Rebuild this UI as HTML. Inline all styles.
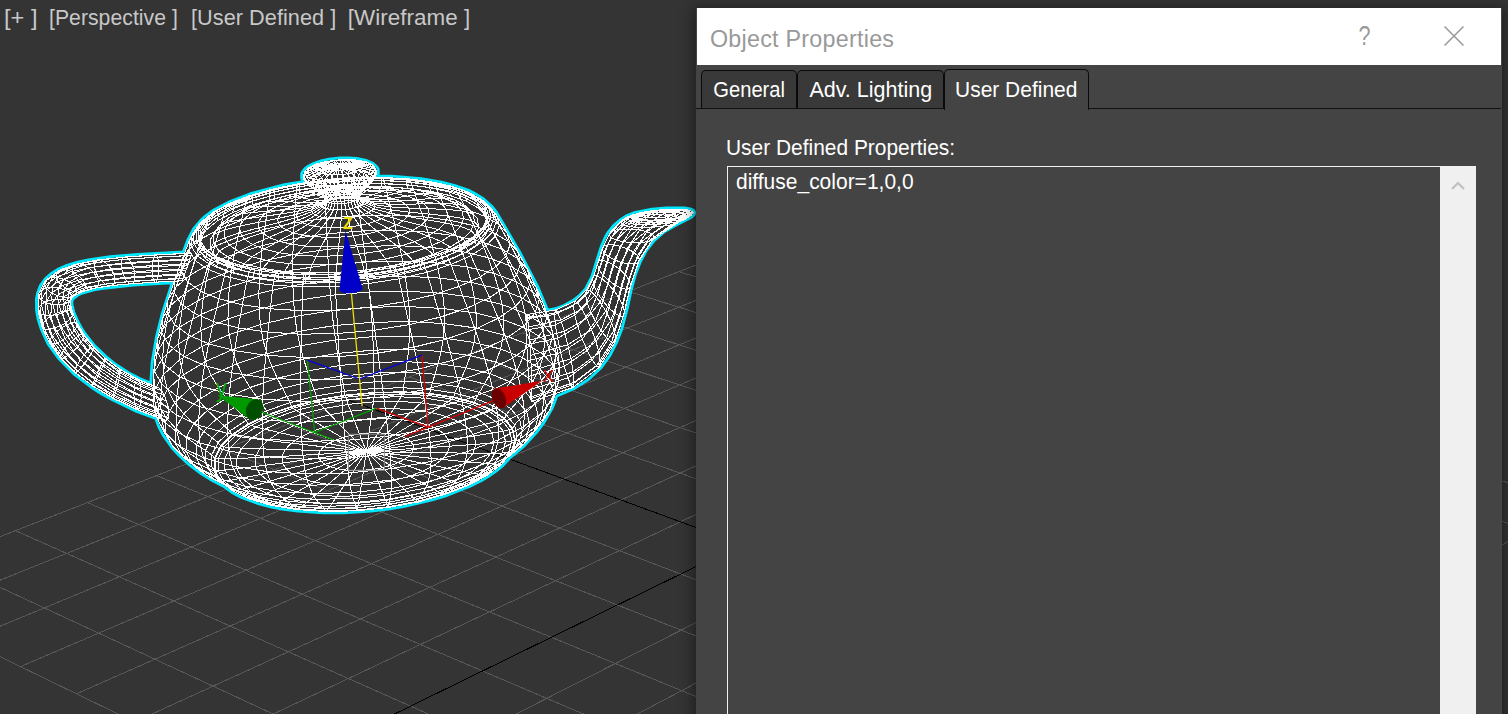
<!DOCTYPE html>
<html lang="en">
<head>
<meta charset="utf-8">
<title>Object Properties</title>
<style>
html,body{margin:0;padding:0;}
body{width:1508px;height:714px;overflow:hidden;background:#343434;position:relative;font-family:"Liberation Sans",sans-serif;}
#vp{position:absolute;left:0;top:0;}
#vplabel span{position:absolute;top:0;transform-origin:left center;}
#vplabel{position:absolute;left:4px;top:5px;width:480px;height:26px;font-size:22.4px;line-height:26px;color:#c8c8c8;white-space:pre;letter-spacing:0.05px;}
#shadow{position:absolute;left:696px;top:8px;width:806px;height:720px;box-shadow:0 2px 14px 2px rgba(0,0,0,0.45);}
#dlg{position:absolute;left:696px;top:8px;width:806px;height:706px;background:#444444;overflow:hidden;}
#title{position:absolute;left:1px;top:0;width:804px;height:57px;background:#ffffff;}
#title .t{position:absolute;left:13px;top:16px;font-size:23.3px;letter-spacing:0.25px;line-height:30px;color:#999999;white-space:nowrap;}
#title .q{position:absolute;left:659.5px;top:12.5px;font-size:27px;line-height:30px;color:#999999;}
#title svg{position:absolute;left:747px;top:17.5px;}
#tabline{position:absolute;left:0;top:100px;width:805px;height:1px;background:#111111;}
.tab{position:absolute;top:62px;height:38px;box-sizing:border-box;background:#393939;border:1px solid #0a0a0a;border-bottom:none;border-radius:5px 5px 0 0;color:#ffffff;font-size:22px;line-height:37px;text-align:center;white-space:nowrap;}
.tab.on{top:61px;height:41px;background:#444444;line-height:39px;}
.tab span,#lbl span,#ta .tx span{display:inline-block;transform-origin:center;}
#lbl span,#ta .tx span{transform-origin:left center;}
#lbl{position:absolute;left:30px;top:127px;font-size:22px;line-height:26px;color:#ffffff;white-space:nowrap;}
#ta{position:absolute;left:31px;top:158px;width:749px;height:600px;box-sizing:border-box;border:1px solid #f0f0f0;background:#444444;}
#ta .tx{position:absolute;left:8px;top:2px;font-size:22px;line-height:26px;color:#ffffff;white-space:nowrap;}
#sb{position:absolute;left:712px;top:0;width:35px;height:600px;background:#f0f0f0;}
#sb svg{position:absolute;left:11px;top:14px;}
</style>
</head>
<body>
<svg id="vp" width="1508" height="714" viewBox="0 0 1508 714">
<defs><clipPath id="out"><path clip-rule="evenodd" d="M-10,-10H1600V800H-10ZM38,310.8 39.5,319 42.2,327.8 49.2,343 59.8,357.5 75.2,373.2 91.8,385.8 102.5,392.8 113.5,398.8 137.2,410.2 156.8,417.5 160.2,426.5 164,433.8 172.8,446.5 180.5,454.8 189.2,463 201,471.8 211.5,478.5 225,485.5 232.8,491.2 241.2,495.8 259.5,502.5 272,505.8 284.2,508 298,509.8 323.2,511.5 343.5,511.5 371.2,509.8 389.5,507.5 404.2,505 431.8,498.5 446.2,494.2 469,485.2 480.5,479.5 487.8,475.2 495.2,470 501.8,464.5 509.2,456.5 523,445 534.8,432.2 542.5,422.2 551.2,407 555.8,395 573.8,387.2 587.8,378.2 599.8,367 608.5,355.2 615.5,341.5 620.5,328.5 626,307.8 630,289 634,274.5 638.8,261.8 645.2,249.8 652.8,240 664,230.2 676,223.5 690,216.5 692.8,214.2 693.2,212.5 692.5,211.2 690.2,210.2 684.2,209.2 666.5,209.2 652.2,210.5 634.5,214 627,217.2 621.2,220.8 614,227.2 609.2,233.2 606.2,238.5 602.5,247 593,277.5 586.8,289.5 580.8,296.2 574.2,301.5 565,306.5 555.8,310 546.8,311.8 536,286.2 518,251.8 495.8,213.8 491,207.5 483,200.2 476,195.8 468.8,192 454.5,187 441.2,183.5 420.8,180 391.5,177.5 375.8,177.2 375.5,176.8 377,173.5 376.8,169.5 376,168 372.2,164.5 366,161.8 356.2,159.8 349,159.2 340.2,159.2 329.2,160.5 321.5,162.2 314.2,164.8 308.8,167.5 306.5,169.2 304,172 303,174 303,178.2 305.5,182.2 304.8,182.8 284.8,186 250.8,195 231.2,202.5 214,211.5 205.8,217.5 202.5,220.5 194.8,229.5 189.2,240.2 184.2,253.2 138.2,255.8 110.5,258 90,261 79,263.2 66.5,267 58.5,270.5 52.2,274.5 47,279 41.5,286.5 38.8,293.8 37.8,299.5ZM77,294 81.8,291.8 93.5,288.5 101,287.2 133.2,283.8 170.8,281.5 174,281.8 163.5,314.2 157.8,337.2 153.5,362.5 152,385 139,379.8 129.2,374.8 112.8,364 106,358.5 93,346 84,334.5 80.2,328.8 76.5,321.8 72.5,312.5 70.5,304.5 70.5,301.2 71.8,298Z"/></clipPath></defs>
<path d="M765,1027.8L-137.1,590.2M765,1027.8L1569.7,500.9M841.6,977.6L-59.3,559.9M683.6,988.3L1497.9,479.8M914.4,929.9L15.5,530.7M605.4,950.4L1428.2,459.2M983.7,884.6L87.4,502.6M530.3,913.9L1360.5,439.3M1049.7,841.4L156.6,475.6M458,878.9L1294.8,419.9M1112.5,800.2L223.2,449.6M388.5,845.2L1230.9,401.1M1172.6,760.9L287.4,424.5M321.5,812.7L1168.7,382.7M1284.8,687.4L409,377M194.6,751.1L1049.5,347.6M1337.3,653.1L466.7,354.5M134.5,722L992.3,330.7M1387.7,620.1L522.4,332.8M76.5,693.8L936.6,314.3M1436,588.5L576.3,311.7M20.4,666.6L882.3,298.3M1482.3,558.1L628.3,291.4M-33.9,640.3L829.4,282.7M1526.8,529L678.8,271.7M-86.3,614.9L777.8,267.5M1569.7,500.9L727.6,252.7M-137.1,590.2L727.6,252.7" stroke="#575757" stroke-width="1" fill="none" shape-rendering="crispEdges"/>
<path d="M1229.9,723.4L349.3,400.3M256.9,781.3L1108.3,364.9" stroke="#000" stroke-width="1" fill="none" shape-rendering="crispEdges"/>
<g clip-path="url(#out)"><path d="M38,310.8 39.5,319 42.2,327.8 49.2,343 59.8,357.5 75.2,373.2 91.8,385.8 102.5,392.8 113.5,398.8 137.2,410.2 156.8,417.5 160.2,426.5 164,433.8 172.8,446.5 180.5,454.8 189.2,463 201,471.8 211.5,478.5 225,485.5 232.8,491.2 241.2,495.8 259.5,502.5 272,505.8 284.2,508 298,509.8 323.2,511.5 343.5,511.5 371.2,509.8 389.5,507.5 404.2,505 431.8,498.5 446.2,494.2 469,485.2 480.5,479.5 487.8,475.2 495.2,470 501.8,464.5 509.2,456.5 523,445 534.8,432.2 542.5,422.2 551.2,407 555.8,395 573.8,387.2 587.8,378.2 599.8,367 608.5,355.2 615.5,341.5 620.5,328.5 626,307.8 630,289 634,274.5 638.8,261.8 645.2,249.8 652.8,240 664,230.2 676,223.5 690,216.5 692.8,214.2 693.2,212.5 692.5,211.2 690.2,210.2 684.2,209.2 666.5,209.2 652.2,210.5 634.5,214 627,217.2 621.2,220.8 614,227.2 609.2,233.2 606.2,238.5 602.5,247 593,277.5 586.8,289.5 580.8,296.2 574.2,301.5 565,306.5 555.8,310 546.8,311.8 536,286.2 518,251.8 495.8,213.8 491,207.5 483,200.2 476,195.8 468.8,192 454.5,187 441.2,183.5 420.8,180 391.5,177.5 375.8,177.2 375.5,176.8 377,173.5 376.8,169.5 376,168 372.2,164.5 366,161.8 356.2,159.8 349,159.2 340.2,159.2 329.2,160.5 321.5,162.2 314.2,164.8 308.8,167.5 306.5,169.2 304,172 303,174 303,178.2 305.5,182.2 304.8,182.8 284.8,186 250.8,195 231.2,202.5 214,211.5 205.8,217.5 202.5,220.5 194.8,229.5 189.2,240.2 184.2,253.2 138.2,255.8 110.5,258 90,261 79,263.2 66.5,267 58.5,270.5 52.2,274.5 47,279 41.5,286.5 38.8,293.8 37.8,299.5ZM77,294 81.8,291.8 93.5,288.5 101,287.2 133.2,283.8 170.8,281.5 174,281.8 163.5,314.2 157.8,337.2 153.5,362.5 152,385 139,379.8 129.2,374.8 112.8,364 106,358.5 93,346 84,334.5 80.2,328.8 76.5,321.8 72.5,312.5 70.5,304.5 70.5,301.2 71.8,298Z" stroke="#00e8ff" stroke-width="5.6" stroke-linejoin="round" fill="none"/></g>
<path id="wire" shape-rendering="crispEdges" d="M362.9,166.4 362.1,167.9 360.5,169.3 358.1,170.7 355,171.9 351.3,172.9 347.2,173.8 342.7,174.4 337.9,174.8M374.4,168.9 373.3,171.1 370.9,173.2 367.4,175.2 362.8,177 357.4,178.6 351.2,179.8 344.5,180.8 337.4,181.3M377,173.2 375.8,175.5 373.3,177.8 369.5,179.9 364.7,181.8 358.9,183.5 352.4,184.9 345.2,185.9 337.7,186.5M373.7,178.7 372.7,180.9 370.4,182.9 367,184.8 362.7,186.6 357.5,188.1 351.6,189.3 345.2,190.2 338.4,190.7M367.6,185 366.8,186.7 364.9,188.4 362.2,189.9 358.8,191.3 354.6,192.5 350,193.5 344.9,194.2 339.5,194.6M361.8,191.4 361.1,192.7 359.8,194 357.7,195.1 355.1,196.2 351.9,197.1 348.4,197.9 344.5,198.4 340.5,198.7M359.3,197.4 358.7,198.5 357.5,199.5 355.8,200.5 353.6,201.4 350.9,202.2 347.9,202.9 344.7,203.3 341.2,203.6M363.1,202.3 362.5,203.6 361,204.9 359,206.1 356.3,207.2 353.1,208.2 349.5,208.9 345.6,209.5 341.5,209.8M339.3,166.4 362.9,166.4 374.4,168.9 377,173.2 373.7,178.7 367.6,185 361.8,191.4 359.3,197.4 363.1,202.3M339.3,166.4 362.1,167.9 373.3,171.1 375.8,175.5 372.7,180.9 366.8,186.7 361.1,192.7 358.7,198.5 362.5,203.6M339.3,166.4 360.5,169.3 370.9,173.2 373.3,177.8 370.4,182.9 364.9,188.4 359.8,194 357.5,199.5 361,204.9M339.3,166.4 358.1,170.7 367.4,175.2 369.5,179.9 367,184.8 362.2,189.9 357.7,195.1 355.8,200.5 359,206.1M339.3,166.4 355,171.9 362.8,177 364.7,181.8 362.7,186.6 358.8,191.3 355.1,196.2 353.6,201.4 356.3,207.2M339.3,166.4 351.3,172.9 357.4,178.6 358.9,183.5 357.5,188.1 354.6,192.5 351.9,197.1 350.9,202.2 353.1,208.2M339.3,166.4 347.2,173.8 351.2,179.8 352.4,184.9 351.6,189.3 350,193.5 348.4,197.9 347.9,202.9 349.5,208.9M339.3,166.4 342.7,174.4 344.5,180.8 345.2,185.9 345.2,190.2 344.9,194.2 344.5,198.4 344.7,203.3 345.6,209.5M339.3,166.4 337.9,174.8 337.4,181.3 337.7,186.5 338.4,190.7 339.5,194.6 340.5,198.7 341.2,203.6 341.5,209.8M340.9,160.2 345.6,160.2 349.9,160.4 353.7,160.9 357,161.6 359.7,162.5 361.6,163.7 362.7,165 362.9,166.4M341.9,159.7 348.8,159.6 355.2,160 360.8,160.7 365.7,161.7 369.6,163.1 372.4,164.8 374.1,166.7 374.4,168.9M342.5,163.4 349.8,163.3 356.5,163.7 362.5,164.4 367.7,165.6 371.8,167.1 374.9,168.8 376.6,170.9 377,173.2M342.8,170 349.3,169.9 355.4,170.2 360.8,170.9 365.4,171.9 369.1,173.2 371.8,174.8 373.4,176.7 373.7,178.7M342.9,178 348.1,177.9 353,178.1 357.3,178.7 361,179.5 364,180.6 366.1,181.9 367.4,183.4 367.6,185M343.1,186 347,186 350.7,186.2 354,186.6 356.8,187.2 359,188 360.7,189 361.6,190.2 361.8,191.4M343.4,192.8 346.8,192.7 349.9,192.9 352.7,193.3 355,193.8 356.9,194.5 358.3,195.3 359.1,196.3 359.3,197.4M344.1,196.8 348.1,196.7 351.9,196.9 355.2,197.4 358,198 360.3,198.9 362,199.9 362.9,201 363.1,202.3M339.3,166.4 340.9,160.2 341.9,159.7 342.5,163.4 342.8,170 342.9,178 343.1,186 343.4,192.8 344.1,196.8M339.3,166.4 345.6,160.2 348.8,159.6 349.8,163.3 349.3,169.9 348.1,177.9 347,186 346.8,192.7 348.1,196.7M339.3,166.4 349.9,160.4 355.2,160 356.5,163.7 355.4,170.2 353,178.1 350.7,186.2 349.9,192.9 351.9,196.9M339.3,166.4 353.7,160.9 360.8,160.7 362.5,164.4 360.8,170.9 357.3,178.7 354,186.6 352.7,193.3 355.2,197.4M339.3,166.4 357,161.6 365.7,161.7 367.7,165.6 365.4,171.9 361,179.5 356.8,187.2 355,193.8 358,198M339.3,166.4 359.7,162.5 369.6,163.1 371.8,167.1 369.1,173.2 364,180.6 359,188 356.9,194.5 360.3,198.9M339.3,166.4 361.6,163.7 372.4,164.8 374.9,168.8 371.8,174.8 366.1,181.9 360.7,189 358.3,195.3 362,199.9M339.3,166.4 362.7,165 374.1,166.7 376.6,170.9 373.4,176.7 367.4,183.4 361.6,190.2 359.1,196.3 362.9,201M315.9,168.5 316.7,167 318.4,165.6 320.8,164.3 323.9,163.1 327.6,162 331.7,161.2 336.2,160.6 340.9,160.2M304.8,172 306.1,169.8 308.6,167.7 312.2,165.7 316.8,163.9 322.3,162.4 328.3,161.2 334.9,160.3 341.9,159.7M303.1,176.5 304.4,174.2 307.1,171.9 310.9,169.8 315.8,167.9 321.6,166.3 328,165 335.1,164 342.5,163.4M307.4,181.8 308.6,179.6 311,177.6 314.4,175.7 318.8,174 324,172.5 329.8,171.3 336.1,170.5 342.8,170M314.7,187.5 315.6,185.7 317.5,184.1 320.3,182.6 323.8,181.2 327.9,180 332.5,179.1 337.6,178.4 342.9,178M321.7,193.3 322.4,192 323.8,190.7 325.9,189.6 328.6,188.5 331.7,187.6 335.2,186.9 339,186.3 343.1,186M325.3,199 325.9,197.9 327.1,196.8 328.9,195.8 331.1,194.9 333.8,194.1 336.7,193.5 340,193.1 343.4,192.8M322.4,204.2 323.1,202.9 324.6,201.6 326.7,200.4 329.4,199.4 332.6,198.4 336.1,197.7 340,197.1 344.1,196.8M339.3,166.4 315.9,168.5 304.8,172 303.1,176.5 307.4,181.8 314.7,187.5 321.7,193.3 325.3,199 322.4,204.2M339.3,166.4 316.7,167 306.1,169.8 304.4,174.2 308.6,179.6 315.6,185.7 322.4,192 325.9,197.9 323.1,202.9M339.3,166.4 318.4,165.6 308.6,167.7 307.1,171.9 311,177.6 317.5,184.1 323.8,190.7 327.1,196.8 324.6,201.6M339.3,166.4 320.8,164.3 312.2,165.7 310.9,169.8 314.4,175.7 320.3,182.6 325.9,189.6 328.9,195.8 326.7,200.4M339.3,166.4 323.9,163.1 316.8,163.9 315.8,167.9 318.8,174 323.8,181.2 328.6,188.5 331.1,194.9 329.4,199.4M339.3,166.4 327.6,162 322.3,162.4 321.6,166.3 324,172.5 327.9,180 331.7,187.6 333.8,194.1 332.6,198.4M339.3,166.4 331.7,161.2 328.3,161.2 328,165 329.8,171.3 332.5,179.1 335.2,186.9 336.7,193.5 336.1,197.7M339.3,166.4 336.2,160.6 334.9,160.3 335.1,164 336.1,170.5 337.6,178.4 339,186.3 340,193.1 340,197.1M337.9,174.8 333.1,174.9 328.8,174.6 324.9,174.1 321.6,173.4 319,172.4 317.1,171.3 316,170 315.9,168.5M337.4,181.3 330.4,181.4 323.9,181.1 318.2,180.4 313.3,179.2 309.4,177.8 306.6,176.1 305,174.2 304.8,172M337.7,186.5 330.2,186.6 323.3,186.2 317.2,185.4 312,184.3 307.9,182.7 304.9,180.9 303.3,178.8 303.1,176.5M338.4,190.7 331.7,190.8 325.6,190.5 320.1,189.8 315.5,188.7 311.7,187.4 309.1,185.7 307.6,183.8 307.4,181.8M339.5,194.6 334.1,194.7 329.2,194.5 324.8,193.9 321.1,193 318.2,191.9 316,190.6 314.8,189.1 314.7,187.5M340.5,198.7 336.4,198.8 332.7,198.6 329.4,198.2 326.6,197.5 324.3,196.7 322.7,195.7 321.8,194.5 321.7,193.3M341.2,203.6 337.8,203.7 334.7,203.5 331.9,203.1 329.5,202.6 327.6,201.9 326.2,201 325.4,200 325.3,199M341.5,209.8 337.4,209.9 333.6,209.7 330.3,209.2 327.4,208.6 325.1,207.7 323.5,206.7 322.6,205.5 322.4,204.2M339.3,166.4 333.1,174.9 330.4,181.4 330.2,186.6 331.7,190.8 334.1,194.7 336.4,198.8 337.8,203.7 337.4,209.9M339.3,166.4 328.8,174.6 323.9,181.1 323.3,186.2 325.6,190.5 329.2,194.5 332.7,198.6 334.7,203.5 333.6,209.7M339.3,166.4 324.9,174.1 318.2,180.4 317.2,185.4 320.1,189.8 324.8,193.9 329.4,198.2 331.9,203.1 330.3,209.2M339.3,166.4 321.6,173.4 313.3,179.2 312,184.3 315.5,188.7 321.1,193 326.6,197.5 329.5,202.6 327.4,208.6M339.3,166.4 319,172.4 309.4,177.8 307.9,182.7 311.7,187.4 318.2,191.9 324.3,196.7 327.6,201.9 325.1,207.7M339.3,166.4 317.1,171.3 306.6,176.1 304.9,180.9 309.1,185.7 316,190.6 322.7,195.7 326.2,201 323.5,206.7M339.3,166.4 316,170 305,174.2 303.3,178.8 307.6,183.8 314.8,189.1 321.8,194.5 325.4,200 322.6,205.5M363.5,202.3 362.9,203.7 361.4,205 359.3,206.2 356.6,207.3 353.3,208.3 349.7,209 345.7,209.6 341.5,209.9M374.8,206.7 373.8,208.8 371.6,210.8 368.4,212.7 364.3,214.4 359.4,215.9 353.8,217.1 347.7,218 341.2,218.5M390.8,209.9 389.3,213 386.1,216 381.3,218.8 375.2,221.4 367.8,223.6 359.4,225.5 350.3,226.8 340.6,227.6M409.6,212.2 407.6,216.5 403.2,220.8 396.6,224.7 388,228.3 377.7,231.5 366,234 353.2,235.9 339.6,237.1M429.2,214.1 426.8,219.8 421.2,225.2 412.7,230.4 401.5,235.1 388.2,239.2 373,242.6 356.4,245.1 338.6,246.6M447.8,216.1 445,222.9 438.3,229.6 428,236 414.5,241.8 398.3,246.8 379.7,251 359.3,254.1 337.6,255.9M463.6,218.5 460.5,226.4 452.8,234.2 441,241.5 425.6,248.2 406.9,254.1 385.5,258.9 362,262.5 336.9,264.6M474.6,221.8 471.2,230.5 463,239 450.2,247 433.4,254.4 413,260.9 389.7,266.2 364,270.1 336.5,272.4M478.9,226.5 475.5,235.5 467.1,244.3 453.9,252.6 436.6,260.2 415.6,266.9 391.5,272.5 365,276.6 336.7,279M363.5,202.3 374.8,206.7 390.8,209.9 409.6,212.2 429.2,214.1 447.8,216.1 463.6,218.5 474.6,221.8 478.9,226.5M362.9,203.7 373.8,208.8 389.3,213 407.6,216.5 426.8,219.8 445,222.9 460.5,226.4 471.2,230.5 475.5,235.5M361.4,205 371.6,210.8 386.1,216 403.2,220.8 421.2,225.2 438.3,229.6 452.8,234.2 463,239 467.1,244.3M359.3,206.2 368.4,212.7 381.3,218.8 396.6,224.7 412.7,230.4 428,236 441,241.5 450.2,247 453.9,252.6M356.6,207.3 364.3,214.4 375.2,221.4 388,228.3 401.5,235.1 414.5,241.8 425.6,248.2 433.4,254.4 436.6,260.2M353.3,208.3 359.4,215.9 367.8,223.6 377.7,231.5 388.2,239.2 398.3,246.8 406.9,254.1 413,260.9 415.6,266.9M349.7,209 353.8,217.1 359.4,225.5 366,234 373,242.6 379.7,251 385.5,258.9 389.7,266.2 391.5,272.5M345.7,209.6 347.7,218 350.3,226.8 353.2,235.9 356.4,245.1 359.3,254.1 362,262.5 364,270.1 365,276.6M341.5,209.9 341.2,218.5 340.6,227.6 339.6,237.1 338.6,246.6 337.6,255.9 336.9,264.6 336.5,272.4 336.7,279M344.1,196.7 348.3,196.6 352,196.8 355.4,197.2 358.3,197.9 360.7,198.8 362.4,199.8 363.3,201 363.5,202.3M345.3,198.2 351.5,198.1 357.3,198.4 362.4,199 366.9,200 370.4,201.3 373,202.9 374.5,204.7 374.8,206.7M346.6,197.1 356,196.9 364.5,197.4 372.2,198.4 378.8,199.9 384.1,201.8 388,204.2 390.3,206.9 390.8,209.9M348.1,194.4 361,194.2 372.9,194.8 383.5,196.2 392.7,198.3 400.1,201 405.6,204.3 408.8,208 409.6,212.2M349.5,191.1 366.2,190.9 381.6,191.7 395.3,193.5 407.1,196.1 416.8,199.6 423.9,203.8 428.2,208.7 429.2,214.1M350.9,188.2 371.1,187.9 389.7,188.9 406.4,191 420.7,194.2 432.5,198.5 441.2,203.6 446.5,209.4 447.8,216.1M352.2,186.5 375.3,186.2 396.6,187.3 415.7,189.7 432.2,193.4 445.7,198.3 455.8,204.1 461.9,210.9 463.6,218.5M353.1,187 378.3,186.6 401.4,187.8 422.2,190.5 440.2,194.5 454.9,199.8 465.9,206.1 472.6,213.5 474.6,221.8M353.8,190.5 379.7,190.1 403.5,191.4 424.9,194.1 443.4,198.3 458.6,203.7 469.9,210.3 476.9,217.9 478.9,226.5M344.1,196.7 345.3,198.2 346.6,197.1 348.1,194.4 349.5,191.1 350.9,188.2 352.2,186.5 353.1,187 353.8,190.5M348.3,196.6 351.5,198.1 356,196.9 361,194.2 366.2,190.9 371.1,187.9 375.3,186.2 378.3,186.6 379.7,190.1M352,196.8 357.3,198.4 364.5,197.4 372.9,194.8 381.6,191.7 389.7,188.9 396.6,187.3 401.4,187.8 403.5,191.4M355.4,197.2 362.4,199 372.2,198.4 383.5,196.2 395.3,193.5 406.4,191 415.7,189.7 422.2,190.5 424.9,194.1M358.3,197.9 366.9,200 378.8,199.9 392.7,198.3 407.1,196.1 420.7,194.2 432.2,193.4 440.2,194.5 443.4,198.3M360.7,198.8 370.4,201.3 384.1,201.8 400.1,201 416.8,199.6 432.5,198.5 445.7,198.3 454.9,199.8 458.6,203.7M362.4,199.8 373,202.9 388,204.2 405.6,204.3 423.9,203.8 441.2,203.6 455.8,204.1 465.9,206.1 469.9,210.3M363.3,201 374.5,204.7 390.3,206.9 408.8,208 428.2,208.7 446.5,209.4 461.9,210.9 472.6,213.5 476.9,217.9M322,204.2 322.7,202.9 324.2,201.6 326.4,200.4 329.1,199.3 332.4,198.3 336,197.6 339.9,197 344.1,196.7M311.6,209.7 312.7,207.6 315,205.6 318.3,203.8 322.5,202.1 327.4,200.7 332.9,199.5 338.9,198.7 345.3,198.2M296.2,214.4 297.9,211.2 301.4,208.3 306.3,205.5 312.6,203 320,200.8 328.2,199.1 337.2,197.8 346.6,197.1M277.8,218.5 280.3,214.1 285.1,209.9 292.1,206.1 300.8,202.6 311.1,199.6 322.5,197.2 335,195.4 348.1,194.4M258.4,222.3 261.7,216.6 268,211.2 277.1,206.2 288.5,201.7 301.7,197.8 316.6,194.7 332.6,192.4 349.5,191.1M239.9,226 244,219.1 251.9,212.5 263,206.4 276.8,201 293,196.3 311,192.5 330.4,189.8 350.9,188.2M224.4,230 229.2,222 238.3,214.4 251.2,207.4 267.2,201.1 285.7,195.8 306.4,191.4 328.7,188.3 352.2,186.5M213.8,234.4 219.2,225.6 229.2,217.4 243.2,209.7 260.7,202.9 280.9,197.1 303.4,192.4 327.6,188.9 353.1,187M210.3,239.6 215.8,230.5 226.2,221.9 240.7,214 258.6,207 279.5,200.9 302.6,196.1 327.6,192.5 353.8,190.5M322,204.2 311.6,209.7 296.2,214.4 277.8,218.5 258.4,222.3 239.9,226 224.4,230 213.8,234.4 210.3,239.6M322.7,202.9 312.7,207.6 297.9,211.2 280.3,214.1 261.7,216.6 244,219.1 229.2,222 219.2,225.6 215.8,230.5M324.2,201.6 315,205.6 301.4,208.3 285.1,209.9 268,211.2 251.9,212.5 238.3,214.4 229.2,217.4 226.2,221.9M326.4,200.4 318.3,203.8 306.3,205.5 292.1,206.1 277.1,206.2 263,206.4 251.2,207.4 243.2,209.7 240.7,214M329.1,199.3 322.5,202.1 312.6,203 300.8,202.6 288.5,201.7 276.8,201 267.2,201.1 260.7,202.9 258.6,207M332.4,198.3 327.4,200.7 320,200.8 311.1,199.6 301.7,197.8 293,196.3 285.7,195.8 280.9,197.1 279.5,200.9M336,197.6 332.9,199.5 328.2,199.1 322.5,197.2 316.6,194.7 311,192.5 306.4,191.4 303.4,192.4 302.6,196.1M339.9,197 338.9,198.7 337.2,197.8 335,195.4 332.6,192.4 330.4,189.8 328.7,188.3 327.6,188.9 327.6,192.5M341.5,209.9 337.3,210 333.4,209.8 330,209.4 327.1,208.7 324.8,207.8 323.1,206.8 322.2,205.6 322,204.2M341.2,218.5 334.8,218.6 329,218.3 323.8,217.6 319.3,216.5 315.8,215.2 313.2,213.6 311.8,211.7 311.6,209.7M340.6,227.6 331,227.7 322.2,227.3 314.3,226.2 307.7,224.6 302.3,222.6 298.6,220.2 296.5,217.4 296.2,214.4M339.6,237.1 326.2,237.3 313.8,236.6 302.9,235.1 293.6,232.9 286.2,230 280.9,226.6 278.1,222.7 277.8,218.5M338.6,246.6 321.1,246.9 305,246 290.7,244 278.6,241.1 269,237.4 262.2,232.9 258.6,227.8 258.4,222.3M337.6,255.9 316.2,256.2 296.4,255.1 279,252.7 264.2,249.2 252.6,244.6 244.4,239.1 240.1,232.8 239.9,226M336.9,264.6 312,265 289.3,263.8 269.1,261 252.1,256.8 238.7,251.5 229.4,245.1 224.5,237.9 224.4,230M336.5,272.4 309.4,272.9 284.5,271.5 262.5,268.4 243.9,263.9 229.3,258 219.1,251 213.8,243.1 213.8,234.4M336.7,279 308.7,279.4 283,278 260.3,274.8 241.2,270.1 226.1,264 215.7,256.7 210.3,248.5 210.3,239.6M337.3,210 334.8,218.6 331,227.7 326.2,237.3 321.1,246.9 316.2,256.2 312,265 309.4,272.9 308.7,279.4M333.4,209.8 329,218.3 322.2,227.3 313.8,236.6 305,246 296.4,255.1 289.3,263.8 284.5,271.5 283,278M330,209.4 323.8,217.6 314.3,226.2 302.9,235.1 290.7,244 279,252.7 269.1,261 262.5,268.4 260.3,274.8M327.1,208.7 319.3,216.5 307.7,224.6 293.6,232.9 278.6,241.1 264.2,249.2 252.1,256.8 243.9,263.9 241.2,270.1M324.8,207.8 315.8,215.2 302.3,222.6 286.2,230 269,237.4 252.6,244.6 238.7,251.5 229.3,258 226.1,264M323.1,206.8 313.2,213.6 298.6,220.2 280.9,226.6 262.2,232.9 244.4,239.1 229.4,245.1 219.1,251 215.7,256.7M322.2,205.6 311.8,211.7 296.5,217.4 278.1,222.7 258.6,227.8 240.1,232.8 224.5,237.9 213.8,243.1 210.3,248.5M489.1,226 485.5,235.7 476.5,245.2 462.4,254.1 443.7,262.4 421.2,269.6 395.2,275.6 366.6,280 336,282.7M487.1,221.9 483.6,231.4 474.6,240.7 460.7,249.6 442.2,257.7 419.9,264.8 394.2,270.7 365.9,275.1 335.7,277.6M486.6,218.9 483,228.4 474.1,237.6 460.1,246.4 441.7,254.5 419.4,261.6 393.8,267.5 365.6,271.8 335.4,274.4M487.2,217 483.6,226.6 474.6,235.9 460.6,244.7 442.1,252.8 419.7,259.9 393.9,265.8 365.5,270.2 335.2,272.7M488.7,216.4 485.1,226 476,235.4 461.9,244.3 443.2,252.5 420.5,259.7 394.4,265.7 365.7,270.1 335,272.7M490.9,216.9 487.3,226.6 478.1,236.2 463.7,245.2 444.7,253.6 421.7,260.9 395.3,267 366.1,271.5 334.9,274.1M493.6,218.5 489.9,228.5 480.6,238.2 466,247.5 446.7,256 423.3,263.5 396.4,269.6 366.7,274.2 334.9,276.9M496.4,221.4 492.7,231.6 483.2,241.5 468.4,251 448.8,259.6 425,267.3 397.6,273.6 367.4,278.3 335.1,281M499.3,225.5 495.5,235.9 485.9,246 470.9,255.7 450.9,264.5 426.7,272.3 398.9,278.8 368.2,283.6 335.3,286.4M489.1,226 487.1,221.9 486.6,218.9 487.2,217 488.7,216.4 490.9,216.9 493.6,218.5 496.4,221.4 499.3,225.5M485.5,235.7 483.6,231.4 483,228.4 483.6,226.6 485.1,226 487.3,226.6 489.9,228.5 492.7,231.6 495.5,235.9M476.5,245.2 474.6,240.7 474.1,237.6 474.6,235.9 476,235.4 478.1,236.2 480.6,238.2 483.2,241.5 485.9,246M462.4,254.1 460.7,249.6 460.1,246.4 460.6,244.7 461.9,244.3 463.7,245.2 466,247.5 468.4,251 470.9,255.7M443.7,262.4 442.2,257.7 441.7,254.5 442.1,252.8 443.2,252.5 444.7,253.6 446.7,256 448.8,259.6 450.9,264.5M421.2,269.6 419.9,264.8 419.4,261.6 419.7,259.9 420.5,259.7 421.7,260.9 423.3,263.5 425,267.3 426.7,272.3M395.2,275.6 394.2,270.7 393.8,267.5 393.9,265.8 394.4,265.7 395.3,267 396.4,269.6 397.6,273.6 398.9,278.8M366.6,280 365.9,275.1 365.6,271.8 365.5,270.2 365.7,270.1 366.1,271.5 366.7,274.2 367.4,278.3 368.2,283.6M336,282.7 335.7,277.6 335.4,274.4 335.2,272.7 335,272.7 334.9,274.1 334.9,276.9 335.1,281 335.3,286.4M354.4,187.4 382.2,187 407.8,188.3 430.7,191.3 450.7,195.7 467,201.5 479.3,208.6 486.9,216.8 489.1,226M354,183.8 381.4,183.4 406.7,184.7 429.5,187.6 449.2,192 465.3,197.7 477.4,204.7 484.9,212.8 487.1,221.9M353.7,180.9 381.1,180.5 406.3,181.9 429,184.8 448.7,189.1 464.8,194.8 476.9,201.8 484.4,209.8 486.6,218.9M353.5,178.9 381.1,178.5 406.5,179.9 429.3,182.8 449.1,187.2 465.3,192.9 477.4,199.9 484.9,207.9 487.2,217M353.6,177.9 381.4,177.5 407.1,178.8 430.1,181.8 450.1,186.2 466.5,192 478.8,199 486.4,207.2 488.7,216.4M353.8,177.8 382,177.4 408.1,178.8 431.4,181.8 451.7,186.2 468.4,192.1 480.9,199.2 488.6,207.5 490.9,216.9M354.1,178.8 382.8,178.4 409.3,179.8 433,182.8 453.7,187.4 470.6,193.4 483.3,200.6 491.2,209 493.6,218.5M354.5,180.9 383.7,180.5 410.6,181.9 434.8,185 455.8,189.7 473,195.8 486,203.2 494,211.8 496.4,221.4M355,184.2 384.7,183.8 412,185.3 436.6,188.4 457.9,193.2 475.4,199.4 488.6,206.9 496.8,215.7 499.3,225.5M354.4,187.4 354,183.8 353.7,180.9 353.5,178.9 353.6,177.9 353.8,177.8 354.1,178.8 354.5,180.9 355,184.2M382.2,187 381.4,183.4 381.1,180.5 381.1,178.5 381.4,177.5 382,177.4 382.8,178.4 383.7,180.5 384.7,183.8M407.8,188.3 406.7,184.7 406.3,181.9 406.5,179.9 407.1,178.8 408.1,178.8 409.3,179.8 410.6,181.9 412,185.3M430.7,191.3 429.5,187.6 429,184.8 429.3,182.8 430.1,181.8 431.4,181.8 433,182.8 434.8,185 436.6,188.4M450.7,195.7 449.2,192 448.7,189.1 449.1,187.2 450.1,186.2 451.7,186.2 453.7,187.4 455.8,189.7 457.9,193.2M467,201.5 465.3,197.7 464.8,194.8 465.3,192.9 466.5,192 468.4,192.1 470.6,193.4 473,195.8 475.4,199.4M479.3,208.6 477.4,204.7 476.9,201.8 477.4,199.9 478.8,199 480.9,199.2 483.3,200.6 486,203.2 488.6,206.9M486.9,216.8 484.9,212.8 484.4,209.8 484.9,207.9 486.4,207.2 488.6,207.5 491.2,209 494,211.8 496.8,215.7M199.8,240.1 205.9,230.3 217.1,221.1 232.7,212.6 252.1,205 274.5,198.5 299.4,193.3 326.2,189.5 354.4,187.4M201,235.7 207,226.1 218.1,217 233.6,208.6 252.7,201.2 274.9,194.8 299.5,189.6 326.1,185.9 354,183.8M201,232.6 207,223 218.1,214 233.5,205.7 252.6,198.2 274.8,191.9 299.3,186.8 325.8,183.1 353.7,180.9M200.1,230.8 206.1,221.2 217.2,212.1 232.7,203.8 251.9,196.3 274.2,189.9 298.9,184.8 325.5,181.1 353.5,178.9M198.4,230.3 204.5,220.6 215.7,211.4 231.4,202.9 250.9,195.4 273.4,189 298.4,183.8 325.3,180 353.6,177.9M196.2,231 202.4,221.1 213.8,211.8 229.8,203.2 249.5,195.6 272.4,189.1 297.8,183.8 325.1,180 353.8,177.8M193.8,233 200.1,222.9 211.8,213.4 228,204.7 248.1,196.9 271.4,190.3 297.2,184.9 324.9,181 354.1,178.8M191.4,236.2 197.9,225.9 209.8,216.2 226.3,207.3 246.7,199.4 270.4,192.6 296.6,187.1 324.8,183.2 354.5,180.9M189.3,240.6 195.9,230.1 208,220.2 224.8,211.1 245.6,203.1 269.6,196.2 296.3,190.6 324.9,186.6 355,184.2M199.8,240.1 201,235.7 201,232.6 200.1,230.8 198.4,230.3 196.2,231 193.8,233 191.4,236.2 189.3,240.6M205.9,230.3 207,226.1 207,223 206.1,221.2 204.5,220.6 202.4,221.1 200.1,222.9 197.9,225.9 195.9,230.1M217.1,221.1 218.1,217 218.1,214 217.2,212.1 215.7,211.4 213.8,211.8 211.8,213.4 209.8,216.2 208,220.2M232.7,212.6 233.6,208.6 233.5,205.7 232.7,203.8 231.4,202.9 229.8,203.2 228,204.7 226.3,207.3 224.8,211.1M252.1,205 252.7,201.2 252.6,198.2 251.9,196.3 250.9,195.4 249.5,195.6 248.1,196.9 246.7,199.4 245.6,203.1M274.5,198.5 274.9,194.8 274.8,191.9 274.2,189.9 273.4,189 272.4,189.1 271.4,190.3 270.4,192.6 269.6,196.2M299.4,193.3 299.5,189.6 299.3,186.8 298.9,184.8 298.4,183.8 297.8,183.8 297.2,184.9 296.6,187.1 296.3,190.6M326.2,189.5 326.1,185.9 325.8,183.1 325.5,181.1 325.3,180 325.1,180 324.9,181 324.8,183.2 324.9,186.6M336,282.7 305.8,283.2 278,281.6 253.5,278.1 232.9,273 216.7,266.4 205.4,258.6 199.7,249.7 199.8,240.1M335.7,277.6 305.8,278.1 278.4,276.6 254.1,273.2 233.7,268.2 217.7,261.7 206.6,254 200.9,245.2 201,235.7M335.4,274.4 305.6,274.9 278.2,273.3 254,269.9 233.7,264.9 217.7,258.5 206.6,250.8 200.9,242.1 201,232.6M335.2,272.7 305.2,273.2 277.7,271.7 253.3,268.3 232.9,263.3 216.8,256.8 205.7,249.1 199.9,240.3 200.1,230.8M335,272.7 304.6,273.2 276.8,271.6 252.2,268.2 231.5,263.1 215.2,256.5 204,248.7 198.2,239.9 198.4,230.3M334.9,274.1 304.1,274.6 275.8,273 250.8,269.5 229.8,264.3 213.3,257.7 201.9,249.7 196,240.8 196.2,231M334.9,276.9 303.5,277.4 274.7,275.8 249.3,272.2 227.9,266.9 211.1,260.1 199.5,252.1 193.6,242.9 193.8,233M335.1,281 303.1,281.6 273.8,279.9 247.9,276.3 226.1,270.9 209,263.9 197.2,255.7 191.2,246.3 191.4,236.2M335.3,286.4 302.8,286.9 273,285.2 246.6,281.5 224.5,276 207.1,268.9 195.2,260.5 189.1,251 189.3,240.6M305.8,283.2 305.8,278.1 305.6,274.9 305.2,273.2 304.6,273.2 304.1,274.6 303.5,277.4 303.1,281.6 302.8,286.9M278,281.6 278.4,276.6 278.2,273.3 277.7,271.7 276.8,271.6 275.8,273 274.7,275.8 273.8,279.9 273,285.2M253.5,278.1 254.1,273.2 254,269.9 253.3,268.3 252.2,268.2 250.8,269.5 249.3,272.2 247.9,276.3 246.6,281.5M232.9,273 233.7,268.2 233.7,264.9 232.9,263.3 231.5,263.1 229.8,264.3 227.9,266.9 226.1,270.9 224.5,276M216.7,266.4 217.7,261.7 217.7,258.5 216.8,256.8 215.2,256.5 213.3,257.7 211.1,260.1 209,263.9 207.1,268.9M205.4,258.6 206.6,254 206.6,250.8 205.7,249.1 204,248.7 201.9,249.7 199.5,252.1 197.2,255.7 195.2,260.5M199.7,249.7 200.9,245.2 200.9,242.1 199.9,240.3 198.2,239.9 196,240.8 193.6,242.9 191.2,246.3 189.1,251M510.1,244.3 506.3,255.5 496.2,266.4 480.3,276.8 459.3,286.4 433.6,294.8 404.1,301.8 371.5,307 336.6,310M520.6,262.9 516.7,274.8 506.2,286.6 489.5,297.7 467.4,308 440.3,317.1 409.2,324.6 374.7,330.2 337.9,333.5M530.5,281.2 526.5,293.9 515.5,306.4 498.2,318.3 475,329.3 446.7,339 414.1,347.1 377.9,353.1 339.2,356.6M539.4,299.2 535.3,312.7 524,325.9 506,338.5 482,350.1 452.5,360.4 418.6,369 380.9,375.3 340.6,379.1M547,316.9 542.9,330.9 531.3,344.8 512.8,358 488,370.2 457.7,381.1 422.6,390 383.7,396.7 342,400.7M553.1,334.1 549,348.7 537.2,363 518.3,376.8 493,389.5 461.9,400.8 426,410.1 386.2,417.1 343.4,421.3M557.4,350.8 553.3,365.8 541.4,380.6 522.3,394.7 496.6,407.8 465.2,419.4 428.7,429 388.3,436.2 344.9,440.5M559.6,366.9 555.5,382.2 543.6,397.2 524.4,411.6 498.7,424.9 467.2,436.7 430.6,446.5 390.1,453.8 346.5,458.2M499.3,225.5 510.1,244.3 520.6,262.9 530.5,281.2 539.4,299.2 547,316.9 553.1,334.1 557.4,350.8 559.6,366.9M495.5,235.9 506.3,255.5 516.7,274.8 526.5,293.9 535.3,312.7 542.9,330.9 549,348.7 553.3,365.8 555.5,382.2M485.9,246 496.2,266.4 506.2,286.6 515.5,306.4 524,325.9 531.3,344.8 537.2,363 541.4,380.6 543.6,397.2M470.9,255.7 480.3,276.8 489.5,297.7 498.2,318.3 506,338.5 512.8,358 518.3,376.8 522.3,394.7 524.4,411.6M450.9,264.5 459.3,286.4 467.4,308 475,329.3 482,350.1 488,370.2 493,389.5 496.6,407.8 498.7,424.9M426.7,272.3 433.6,294.8 440.3,317.1 446.7,339 452.5,360.4 457.7,381.1 461.9,400.8 465.2,419.4 467.2,436.7M398.9,278.8 404.1,301.8 409.2,324.6 414.1,347.1 418.6,369 422.6,390 426,410.1 428.7,429 430.6,446.5M368.2,283.6 371.5,307 374.7,330.2 377.9,353.1 380.9,375.3 383.7,396.7 386.2,417.1 388.3,436.2 390.1,453.8M335.3,286.4 336.6,310 337.9,333.5 339.2,356.6 340.6,379.1 342,400.7 343.4,421.3 344.9,440.5 346.5,458.2M357.3,200 388.7,199.5 417.5,201 443.5,204.4 466.1,209.5 484.7,216.2 498.7,224.2 507.4,233.7 510.1,244.3M359.6,215.5 392.5,215 422.9,216.7 450.2,220.3 474,225.7 493.6,232.8 508.4,241.4 517.7,251.5 520.6,262.9M361.7,231 396.2,230.4 427.9,232.2 456.5,236 481.4,241.7 501.9,249.2 517.5,258.4 527.3,269.1 530.5,281.2M363.8,246.3 399.5,245.7 432.5,247.6 462.2,251.6 488,257.6 509.4,265.5 525.7,275.2 535.9,286.5 539.4,299.2M365.8,261.6 402.6,261 436.6,262.9 467.2,267 493.8,273.3 515.9,281.6 532.7,291.7 543.4,303.5 547,316.9M367.6,276.8 405.2,276.2 440,278.1 471.3,282.4 498.6,288.9 521.2,297.5 538.4,308 549.3,320.2 553.1,334.1M369.3,292 407.4,291.3 442.6,293.3 474.3,297.8 502,304.5 524.9,313.2 542.4,324 553.5,336.5 557.4,350.8M370.8,307.2 409,306.6 444.3,308.6 476.2,313.1 503.9,319.9 527,328.8 544.5,339.7 555.7,352.5 559.6,366.9M355,184.2 357.3,200 359.6,215.5 361.7,231 363.8,246.3 365.8,261.6 367.6,276.8 369.3,292 370.8,307.2M384.7,183.8 388.7,199.5 392.5,215 396.2,230.4 399.5,245.7 402.6,261 405.2,276.2 407.4,291.3 409,306.6M412,185.3 417.5,201 422.9,216.7 427.9,232.2 432.5,247.6 436.6,262.9 440,278.1 442.6,293.3 444.3,308.6M436.6,188.4 443.5,204.4 450.2,220.3 456.5,236 462.2,251.6 467.2,267 471.3,282.4 474.3,297.8 476.2,313.1M457.9,193.2 466.1,209.5 474,225.7 481.4,241.7 488,257.6 493.8,273.3 498.6,288.9 502,304.5 503.9,319.9M475.4,199.4 484.7,216.2 493.6,232.8 501.9,249.2 509.4,265.5 515.9,281.6 521.2,297.5 524.9,313.2 527,328.8M488.6,206.9 498.7,224.2 508.4,241.4 517.5,258.4 525.7,275.2 532.7,291.7 538.4,308 542.4,324 544.5,339.7M496.8,215.7 507.4,233.7 517.7,251.5 527.3,269.1 535.9,286.5 543.4,303.5 549.3,320.2 553.5,336.5 555.7,352.5M181.8,260.6 188.8,249.3 201.7,238.6 219.6,228.9 241.6,220.2 267,212.8 295.2,206.8 325.5,202.5 357.3,200M174.6,280.4 182.1,268.3 195.7,256.9 214.6,246.4 237.8,237.1 264.6,229.2 294.2,222.8 326.1,218.2 359.6,215.5M168,300 175.9,287.1 190.3,274.9 210,263.8 234.4,253.9 262.4,245.5 293.4,238.7 326.7,233.8 361.7,231M162.3,319.1 170.6,305.5 185.6,292.7 206.2,280.9 231.5,270.5 260.7,261.6 292.9,254.5 327.5,249.3 363.8,246.3M157.9,337.8 166.5,323.5 182,310.1 203.3,297.8 229.4,286.9 259.5,277.6 292.7,270.1 328.3,264.7 365.8,261.6M154.9,355.9 163.8,341 179.6,327.1 201.4,314.3 228.2,303 258.9,293.4 292.9,285.7 329.3,280 367.6,276.8M153.7,373.3 162.7,358 178.8,343.7 200.9,330.6 228,319 259.2,309.1 293.6,301.1 330.5,295.3 369.3,292M154.6,389.9 163.6,374.4 179.7,359.8 201.9,346.5 229.1,334.7 260.4,324.6 294.9,316.5 331.9,310.7 370.8,307.2M189.3,240.6 181.8,260.6 174.6,280.4 168,300 162.3,319.1 157.9,337.8 154.9,355.9 153.7,373.3 154.6,389.9M195.9,230.1 188.8,249.3 182.1,268.3 175.9,287.1 170.6,305.5 166.5,323.5 163.8,341 162.7,358 163.6,374.4M208,220.2 201.7,238.6 195.7,256.9 190.3,274.9 185.6,292.7 182,310.1 179.6,327.1 178.8,343.7 179.7,359.8M224.8,211.1 219.6,228.9 214.6,246.4 210,263.8 206.2,280.9 203.3,297.8 201.4,314.3 200.9,330.6 201.9,346.5M245.6,203.1 241.6,220.2 237.8,237.1 234.4,253.9 231.5,270.5 229.4,286.9 228.2,303 228,319 229.1,334.7M269.6,196.2 267,212.8 264.6,229.2 262.4,245.5 260.7,261.6 259.5,277.6 258.9,293.4 259.2,309.1 260.4,324.6M296.3,190.6 295.2,206.8 294.2,222.8 293.4,238.7 292.9,254.5 292.7,270.1 292.9,285.7 293.6,301.1 294.9,316.5M324.9,186.6 325.5,202.5 326.1,218.2 326.7,233.8 327.5,249.3 328.3,264.7 329.3,280 330.5,295.3 331.9,310.7M336.6,310 302,310.7 270.4,308.8 242.4,304.8 218.9,298.8 200.5,291.2 187.9,282.1 181.5,271.8 181.8,260.6M337.9,333.5 301.4,334.2 267.9,332.2 238.3,327.9 213.5,321.5 194.2,313.2 180.9,303.5 174.2,292.4 174.6,280.4M339.2,356.6 300.8,357.3 265.7,355.3 234.7,350.6 208.7,343.8 188.4,335 174.5,324.5 167.5,312.8 168,300M340.6,379.1 300.6,379.9 263.9,377.7 231.6,372.8 204.5,365.5 183.4,356.2 168.9,345.1 161.8,332.7 162.3,319.1M342,400.7 300.6,401.5 262.7,399.2 229.3,394.1 201.3,386.5 179.5,376.7 164.6,365 157.2,352 157.9,337.8M343.4,421.3 301,422.1 262.2,419.7 228,414.4 199.3,406.5 176.9,396.3 161.7,384.2 154.2,370.6 154.9,355.9M344.9,440.5 301.9,441.4 262.5,438.9 227.8,433.5 198.7,425.3 176,414.8 160.6,402.4 153,388.4 153.7,373.3M346.5,458.2 303.4,459.1 263.8,456.6 228.9,451.1 199.7,442.8 177,432.1 161.5,419.5 153.8,405.3 154.6,389.9M302.8,286.9 302,310.7 301.4,334.2 300.8,357.3 300.6,379.9 300.6,401.5 301,422.1 301.9,441.4 303.4,459.1M273,285.2 270.4,308.8 267.9,332.2 265.7,355.3 263.9,377.7 262.7,399.2 262.2,419.7 262.5,438.9 263.8,456.6M246.6,281.5 242.4,304.8 238.3,327.9 234.7,350.6 231.6,372.8 229.3,394.1 228,414.4 227.8,433.5 228.9,451.1M224.5,276 218.9,298.8 213.5,321.5 208.7,343.8 204.5,365.5 201.3,386.5 199.3,406.5 198.7,425.3 199.7,442.8M207.1,268.9 200.5,291.2 194.2,313.2 188.4,335 183.4,356.2 179.5,376.7 176.9,396.3 176,414.8 177,432.1M195.2,260.5 187.9,282.1 180.9,303.5 174.5,324.5 168.9,345.1 164.6,365 161.7,384.2 160.6,402.4 161.5,419.5M189.1,251 181.5,271.8 174.2,292.4 167.5,312.8 161.8,332.7 157.2,352 154.2,370.6 153,388.4 153.8,405.3M558.5,381.9 554.4,397.2 542.6,412.2 523.7,426.5 498.4,439.8 467.2,451.6 431.2,461.4 391.1,468.7 348.2,473M553.8,395.2 549.8,410.1 538.3,424.8 520,438.9 495.3,451.9 465.1,463.4 430.2,472.9 391.5,480.1 349.9,484.3M546.7,406.7 542.7,421.1 531.7,435.3 514.1,448.9 490.5,461.4 461.6,472.4 428.3,481.6 391.3,488.5 351.6,492.6M538.3,416.6 534.5,430.4 523.9,443.9 507.1,456.8 484.7,468.8 457.3,479.3 425.7,488.1 390.7,494.6 353.2,498.5M529.8,424.8 526.1,438 516,450.8 500.1,463.1 478.8,474.4 452.9,484.4 423,492.7 390,498.9 354.5,502.6M522.3,431.4 518.7,444 509.1,456.3 493.9,468 473.7,478.8 449,488.3 420.7,496.2 389.3,502.1 355.7,505.6M517.1,436.4 513.6,448.6 504.2,460.4 489.6,471.7 470.1,482.2 446.3,491.4 419,499 388.8,504.6 356.5,508M515.2,439.8 511.7,451.8 502.5,463.5 488,474.7 468.8,485 445.4,494.1 418.5,501.6 388.8,507.2 357,510.5M559.6,366.9 558.5,381.9 553.8,395.2 546.7,406.7 538.3,416.6 529.8,424.8 522.3,431.4 517.1,436.4 515.2,439.8M555.5,382.2 554.4,397.2 549.8,410.1 542.7,421.1 534.5,430.4 526.1,438 518.7,444 513.6,448.6 511.7,451.8M543.6,397.2 542.6,412.2 538.3,424.8 531.7,435.3 523.9,443.9 516,450.8 509.1,456.3 504.2,460.4 502.5,463.5M524.4,411.6 523.7,426.5 520,438.9 514.1,448.9 507.1,456.8 500.1,463.1 493.9,468 489.6,471.7 488,474.7M498.7,424.9 498.4,439.8 495.3,451.9 490.5,461.4 484.7,468.8 478.8,474.4 473.7,478.8 470.1,482.2 468.8,485M467.2,436.7 467.2,451.6 465.1,463.4 461.6,472.4 457.3,479.3 452.9,484.4 449,488.3 446.3,491.4 445.4,494.1M430.6,446.5 431.2,461.4 430.2,472.9 428.3,481.6 425.7,488.1 423,492.7 420.7,496.2 419,499 418.5,501.6M390.1,453.8 391.1,468.7 391.5,480.1 391.3,488.5 390.7,494.6 390,498.9 389.3,502.1 388.8,504.6 388.8,507.2M346.5,458.2 348.2,473 349.9,484.3 351.6,492.6 353.2,498.5 354.5,502.6 355.7,505.6 356.5,508 357,510.5M372,322.3 409.8,321.6 444.6,323.6 476.1,328.1 503.5,334.9 526.3,343.8 543.6,354.7 554.6,367.5 558.5,381.9M372.8,336.7 409.5,336 443.4,338 473.9,342.4 500.6,349 522.6,357.8 539.4,368.5 550.1,381 553.8,395.2M373.4,350.1 408.6,349.5 441.1,351.4 470.4,355.7 495.9,362.1 517,370.6 533,380.9 543.2,393 546.7,406.7M373.7,362.4 407.2,361.7 438.1,363.6 466,367.7 490.2,373.8 510.3,382 525.5,391.9 535.1,403.5 538.3,416.6M373.9,373.1 405.7,372.4 435.1,374.2 461.5,378.1 484.4,384 503.4,391.8 517.8,401.3 526.8,412.3 529.8,424.8M374.1,381.9 404.4,381.3 432.3,382.9 457.5,386.7 479.4,392.4 497.4,399.8 511,408.9 519.6,419.5 522.3,431.4M374.2,388.4 403.4,387.8 430.4,389.5 454.7,393.1 475.8,398.6 493.2,405.8 506.3,414.6 514.5,424.9 517.1,436.4M374.4,392.4 403.2,391.8 429.8,393.4 453.7,397 474.5,402.4 491.7,409.6 504.6,418.3 512.6,428.4 515.2,439.8M370.8,307.2 372,322.3 372.8,336.7 373.4,350.1 373.7,362.4 373.9,373.1 374.1,381.9 374.2,388.4 374.4,392.4M409,306.6 409.8,321.6 409.5,336 408.6,349.5 407.2,361.7 405.7,372.4 404.4,381.3 403.4,387.8 403.2,391.8M444.3,308.6 444.6,323.6 443.4,338 441.1,351.4 438.1,363.6 435.1,374.2 432.3,382.9 430.4,389.5 429.8,393.4M476.2,313.1 476.1,328.1 473.9,342.4 470.4,355.7 466,367.7 461.5,378.1 457.5,386.7 454.7,393.1 453.7,397M503.9,319.9 503.5,334.9 500.6,349 495.9,362.1 490.2,373.8 484.4,384 479.4,392.4 475.8,398.6 474.5,402.4M527,328.8 526.3,343.8 522.6,357.8 517,370.6 510.3,382 503.4,391.8 497.4,399.8 493.2,405.8 491.7,409.6M544.5,339.7 543.6,354.7 539.4,368.5 533,380.9 525.5,391.9 517.8,401.3 511,408.9 506.3,414.6 504.6,418.3M555.7,352.5 554.6,367.5 550.1,381 543.2,393 535.1,403.5 526.8,412.3 519.6,419.5 514.5,424.9 512.6,428.4M158.6,404.9 167.5,389.4 183.4,374.9 205.3,361.6 232.1,349.7 262.9,339.7 297,331.6 333.6,325.7 372,322.3M166.1,417.7 174.6,402.6 189.9,388.3 211.1,375.3 237.1,363.7 267,353.8 300,345.8 335.5,340 372.8,336.7M175.7,428.5 183.7,413.9 198.3,400.1 218.5,387.5 243.3,376.3 271.9,366.7 303.6,359 337.6,353.4 373.4,350.1M186.2,437.5 193.8,423.5 207.5,410.3 226.6,398.2 250.1,387.5 277.3,378.3 307.4,370.9 339.7,365.5 373.7,362.4M196.6,444.7 203.6,431.4 216.5,418.9 234.5,407.3 256.7,397.1 282.5,388.3 311,381.2 341.7,376.1 373.9,373.1M205.5,450.5 212.1,437.8 224.3,425.8 241.4,414.7 262.5,404.9 286.9,396.5 314.1,389.7 343.3,384.7 374.1,381.9M211.8,454.8 218.1,442.6 229.8,431 246.2,420.3 266.6,410.8 290.1,402.6 316.3,396 344.5,391.2 374.2,388.4M214.4,458 220.6,445.9 232.1,434.4 248.3,423.9 268.3,414.5 291.5,406.4 317.3,399.9 345.1,395.1 374.4,392.4M154.6,389.9 158.6,404.9 166.1,417.7 175.7,428.5 186.2,437.5 196.6,444.7 205.5,450.5 211.8,454.8 214.4,458M163.6,374.4 167.5,389.4 174.6,402.6 183.7,413.9 193.8,423.5 203.6,431.4 212.1,437.8 218.1,442.6 220.6,445.9M179.7,359.8 183.4,374.9 189.9,388.3 198.3,400.1 207.5,410.3 216.5,418.9 224.3,425.8 229.8,431 232.1,434.4M201.9,346.5 205.3,361.6 211.1,375.3 218.5,387.5 226.6,398.2 234.5,407.3 241.4,414.7 246.2,420.3 248.3,423.9M229.1,334.7 232.1,349.7 237.1,363.7 243.3,376.3 250.1,387.5 256.7,397.1 262.5,404.9 266.6,410.8 268.3,414.5M260.4,324.6 262.9,339.7 267,353.8 271.9,366.7 277.3,378.3 282.5,388.3 286.9,396.5 290.1,402.6 291.5,406.4M294.9,316.5 297,331.6 300,345.8 303.6,359 307.4,370.9 311,381.2 314.1,389.7 316.3,396 317.3,399.9M331.9,310.7 333.6,325.7 335.5,340 337.6,353.4 339.7,365.5 341.7,376.1 343.3,384.7 344.5,391.2 345.1,395.1M348.2,473 305.6,474 266.6,471.5 232.2,466 203.4,457.7 180.9,447.1 165.6,434.5 158,420.3 158.6,404.9M349.9,484.3 308.7,485.2 271,482.8 237.6,477.4 209.7,469.3 187.9,459 173,446.7 165.5,432.8 166.1,417.7M351.6,492.6 312.3,493.5 276.2,491.2 244.4,486 217.7,478.2 196.8,468.2 182.5,456.4 175.3,443.1 175.7,428.5M353.2,498.5 316,499.3 281.8,497.1 251.7,492.2 226.3,484.8 206.5,475.3 192.9,464.1 186,451.3 186.2,437.5M354.5,502.6 319.4,503.4 287.2,501.3 258.7,496.6 234.8,489.7 216,480.7 203,470 196.4,457.9 196.6,444.7M355.7,505.6 322.4,506.3 291.8,504.4 264.8,499.9 242,493.3 224.2,484.7 211.8,474.5 205.4,463 205.5,450.5M356.5,508 324.5,508.7 295.1,506.8 269.1,502.6 247.2,496.2 229.9,487.9 218,478.1 211.8,467 211.8,454.8M357,510.5 325.4,511.2 296.5,509.4 270.9,505.1 249.3,498.8 232.3,490.7 220.5,481 214.4,470 214.4,458M303.4,459.1 305.6,474 308.7,485.2 312.3,493.5 316,499.3 319.4,503.4 322.4,506.3 324.5,508.7 325.4,511.2M263.8,456.6 266.6,471.5 271,482.8 276.2,491.2 281.8,497.1 287.2,501.3 291.8,504.4 295.1,506.8 296.5,509.4M228.9,451.1 232.2,466 237.6,477.4 244.4,486 251.7,492.2 258.7,496.6 264.8,499.9 269.1,502.6 270.9,505.1M199.7,442.8 203.4,457.7 209.7,469.3 217.7,478.2 226.3,484.8 234.8,489.7 242,493.3 247.2,496.2 249.3,498.8M177,432.1 180.9,447.1 187.9,459 196.8,468.2 206.5,475.3 216,480.7 224.2,484.7 229.9,487.9 232.3,490.7M161.5,419.5 165.6,434.5 173,446.7 182.5,456.4 192.9,464.1 203,470 211.8,474.5 218,478.1 220.5,481M153.8,405.3 158,420.3 165.5,432.8 175.3,443.1 186,451.3 196.4,457.9 205.4,463 211.8,467 214.4,470M183.1,278.2 182.3,280.8 182.4,280.7 183.2,278.6 184.5,274.9 186.1,270.1 187.9,265 189.6,259.9 191,255.5M157.1,279.6 155.8,282.2 154.6,282.2 153.5,280.1 152.8,276.5 152.4,271.9 152.5,266.8 153,261.8 154.1,257.4M134.1,281.1 132.3,283.7 130,283.8 127.5,281.8 125.1,278.4 123,273.9 121.7,268.9 121.2,264 122,259.6M114.4,282.9 112.2,285.6 109,285.8 105.3,284.1 101.5,280.8 98.1,276.6 95.6,271.8 94.4,267 95,262.6M98,285.4 95.6,288.1 91.7,288.6 87.1,287.1 82.3,284.2 77.8,280.3 74.4,275.9 72.6,271.2 73,267M85.3,288.7 82.6,291.6 78.3,292.3 73,291.4 67.4,289 62.3,285.7 58.2,281.6 56,277.3 56.3,273.2M76.3,293.1 73.5,296.2 68.8,297.5 63.2,297.2 57.1,295.6 51.6,293 47.2,289.6 44.7,285.8 44.9,281.7M71.2,298.9 68.3,302.3 63.6,304.2 57.8,304.8 51.6,304.3 45.8,302.7 41.3,300.2 38.7,297 38.9,293.2M70.2,306.4 67.4,310 62.7,312.8 56.9,314.6 50.8,315.4 45.2,315.2 40.7,313.9 38.2,311.5 38.4,308M183.1,278.2 157.1,279.6 134.1,281.1 114.4,282.9 98,285.4 85.3,288.7 76.3,293.1 71.2,298.9 70.2,306.4M182.3,280.8 155.8,282.2 132.3,283.7 112.2,285.6 95.6,288.1 82.6,291.6 73.5,296.2 68.3,302.3 67.4,310M182.4,280.7 154.6,282.2 130,283.8 109,285.8 91.7,288.6 78.3,292.3 68.8,297.5 63.6,304.2 62.7,312.8M183.2,278.6 153.5,280.1 127.5,281.8 105.3,284.1 87.1,287.1 73,291.4 63.2,297.2 57.8,304.8 56.9,314.6M184.5,274.9 152.8,276.5 125.1,278.4 101.5,280.8 82.3,284.2 67.4,289 57.1,295.6 51.6,304.3 50.8,315.4M186.1,270.1 152.4,271.9 123,273.9 98.1,276.6 77.8,280.3 62.3,285.7 51.6,293 45.8,302.7 45.2,315.2M187.9,265 152.5,266.8 121.7,268.9 95.6,271.8 74.4,275.9 58.2,281.6 47.2,289.6 41.3,300.2 40.7,313.9M189.6,259.9 153,261.8 121.2,264 94.4,267 72.6,271.2 56,277.3 44.7,285.8 38.7,297 38.2,311.5M191,255.5 154.1,257.4 122,259.6 95,262.6 73,267 56.3,273.2 44.9,281.7 38.9,293.2 38.4,308M183.1,278.2 184.6,273.8 186.3,268.8 188,263.7 189.6,259 190.9,255.4 191.7,253.2 191.8,253 191,255.5M157.1,279.6 158.2,275.2 158.7,270.2 158.7,265.2 158.4,260.6 157.6,257.1 156.6,255 155.4,254.9 154.1,257.4M134.1,281.1 134.9,276.7 134.4,271.8 133.1,266.9 131,262.4 128.7,259 126.2,257.1 123.9,257.1 122,259.6M114.4,282.9 114.9,278.5 113.7,273.8 111.2,269 107.8,264.8 104.1,261.6 100.4,259.9 97.2,260 95,262.6M98,285.4 98.4,281.1 96.5,276.5 93.2,272.1 88.8,268.2 84,265.3 79.4,263.9 75.5,264.3 73,267M85.3,288.7 85.5,284.5 83.2,280.2 79.2,276.3 74.2,272.9 68.7,270.6 63.4,269.6 59,270.3 56.3,273.2M76.3,293.1 76.4,289.1 73.9,285.3 69.5,282 64,279.4 58.1,277.8 52.4,277.5 47.8,278.7 44.9,281.7M71.2,298.9 71.3,295.1 68.7,291.9 64.2,289.5 58.5,288 52.4,287.4 46.6,288 41.9,289.9 38.9,293.2M70.2,306.4 70.3,302.8 67.8,300.5 63.4,299.2 57.8,299 51.8,299.8 46.1,301.6 41.4,304.3 38.4,308M184.6,273.8 158.2,275.2 134.9,276.7 114.9,278.5 98.4,281.1 85.5,284.5 76.4,289.1 71.3,295.1 70.3,302.8M186.3,268.8 158.7,270.2 134.4,271.8 113.7,273.8 96.5,276.5 83.2,280.2 73.9,285.3 68.7,291.9 67.8,300.5M188,263.7 158.7,265.2 133.1,266.9 111.2,269 93.2,272.1 79.2,276.3 69.5,282 64.2,289.5 63.4,299.2M189.6,259 158.4,260.6 131,262.4 107.8,264.8 88.8,268.2 74.2,272.9 64,279.4 58.5,288 57.8,299M190.9,255.4 157.6,257.1 128.7,259 104.1,261.6 84,265.3 68.7,270.6 58.1,277.8 52.4,287.4 51.8,299.8M191.7,253.2 156.6,255 126.2,257.1 100.4,259.9 79.4,263.9 63.4,269.6 52.4,277.5 46.6,288 46.1,301.6M191.8,253 155.4,254.9 123.9,257.1 97.2,260 75.5,264.3 59,270.3 47.8,278.7 41.9,289.9 41.4,304.3M72.4,315.6 69.7,319.6 65.2,323.2 59.7,326.1 54,328.3 48.6,329.4 44.5,329.2 42.2,327.6 42.4,324.3M77,326.2 74.3,330.4 70.2,334.6 65.2,338.4 60,341.5 55.2,343.6 51.5,344.2 49.5,343.1 49.9,340M83.8,337.7 81.4,342.1 77.8,346.7 73.4,351.1 68.9,354.8 64.9,357.5 61.8,358.7 60.3,358 60.8,355M93.1,349.5 90.9,354.1 87.9,359 84.4,363.8 80.9,368 77.8,371.1 75.5,372.6 74.5,372.2 75.2,369.3M104.7,361.2 102.9,365.8 100.6,371 98.1,376.1 95.8,380.6 93.9,384 92.6,385.9 92.3,385.6 93.2,382.7M118.8,372.1 117.3,376.9 115.9,382.2 114.7,387.6 113.7,392.4 113.1,396.2 113,398.3 113.5,398.2 114.7,395.4M135.4,381.9 134.4,386.7 133.9,392.3 134.1,398 134.7,403.2 135.7,407.3 136.9,409.7 138.3,409.9 139.7,407.1M154.6,389.9 154,394.9 154.7,400.8 156.4,407 158.8,412.7 161.5,417.3 164.2,420.2 166.6,420.6 168.4,417.9M70.2,306.4 72.4,315.6 77,326.2 83.8,337.7 93.1,349.5 104.7,361.2 118.8,372.1 135.4,381.9 154.6,389.9M67.4,310 69.7,319.6 74.3,330.4 81.4,342.1 90.9,354.1 102.9,365.8 117.3,376.9 134.4,386.7 154,394.9M62.7,312.8 65.2,323.2 70.2,334.6 77.8,346.7 87.9,359 100.6,371 115.9,382.2 133.9,392.3 154.7,400.8M56.9,314.6 59.7,326.1 65.2,338.4 73.4,351.1 84.4,363.8 98.1,376.1 114.7,387.6 134.1,398 156.4,407M50.8,315.4 54,328.3 60,341.5 68.9,354.8 80.9,368 95.8,380.6 113.7,392.4 134.7,403.2 158.8,412.7M45.2,315.2 48.6,329.4 55.2,343.6 64.9,357.5 77.8,371.1 93.9,384 113.1,396.2 135.7,407.3 161.5,417.3M40.7,313.9 44.5,329.2 51.5,344.2 61.8,358.7 75.5,372.6 92.6,385.9 113,398.3 136.9,409.7 164.2,420.2M38.2,311.5 42.2,327.6 49.5,343.1 60.3,358 74.5,372.2 92.3,385.6 113.5,398.2 138.3,409.9 166.6,420.6M38.4,308 42.4,324.3 49.9,340 60.8,355 75.2,369.3 93.2,382.7 114.7,395.4 139.7,407.1 168.4,417.9M72.4,315.6 72.6,312.3 70.3,310.8 66.1,310.6 60.9,311.7 55.2,313.8 49.7,316.8 45.3,320.3 42.4,324.3M77,326.2 77.2,323.1 75.2,322.1 71.5,322.8 66.8,324.8 61.6,327.8 56.7,331.6 52.5,335.8 49.9,340M83.8,337.7 84.3,334.8 82.7,334.1 79.6,335.3 75.6,338 71.2,341.7 66.9,346 63.3,350.6 60.8,355M93.1,349.5 93.7,346.7 92.7,346.3 90.4,347.9 87.4,351 83.9,355.1 80.5,359.8 77.4,364.7 75.2,369.3M104.7,361.2 105.6,358.4 105.2,358.2 104,360 102.1,363.5 99.8,367.9 97.3,373 95,378.1 93.2,382.7M118.8,372.1 120,369.4 120.4,369.4 120.3,371.5 119.7,375.2 118.8,380 117.6,385.3 116.2,390.6 114.7,395.4M135.4,381.9 136.9,379.2 138.3,379.4 139.5,381.8 140.4,385.9 141,391 141.2,396.7 140.8,402.2 139.7,407.1M154.6,389.9 156.4,387.3 158.8,387.8 161.5,390.7 164.2,395.3 166.5,400.9 168.2,407 168.9,412.9 168.4,417.9M70.3,302.8 72.6,312.3 77.2,323.1 84.3,334.8 93.7,346.7 105.6,358.4 120,369.4 136.9,379.2 156.4,387.3M67.8,300.5 70.3,310.8 75.2,322.1 82.7,334.1 92.7,346.3 105.2,358.2 120.4,369.4 138.3,379.4 158.8,387.8M63.4,299.2 66.1,310.6 71.5,322.8 79.6,335.3 90.4,347.9 104,360 120.3,371.5 139.5,381.8 161.5,390.7M57.8,299 60.9,311.7 66.8,324.8 75.6,338 87.4,351 102.1,363.5 119.7,375.2 140.4,385.9 164.2,395.3M51.8,299.8 55.2,313.8 61.6,327.8 71.2,341.7 83.9,355.1 99.8,367.9 118.8,380 141,391 166.5,400.9M46.1,301.6 49.7,316.8 56.7,331.6 66.9,346 80.5,359.8 97.3,373 117.6,385.3 141.2,396.7 168.2,407M41.4,304.3 45.3,320.3 52.5,335.8 63.3,350.6 77.4,364.7 95,378.1 116.2,390.6 140.8,402.2 168.9,412.9M526.3,318.8 526.3,330 526.8,344.6 527.6,360.8 528.6,376.4 529.7,389.7 530.7,398.7 531.4,401.6 531.9,396.8M554.6,314.5 555.4,325 557.6,338.3 560.7,352.7 564.3,366.4 567.9,377.9 571,385.4 573.2,387.4 573.9,382.5M573.5,305.8 574.7,315.2 577.8,326.7 582.3,339 587.3,350.5 592.3,360 596.5,366 599.5,367.2 600.4,362.5M585.4,293.8 586.8,301.9 590.4,311.4 595.4,321.3 601.1,330.5 606.7,337.9 611.5,342.3 614.7,342.8 615.8,338.4M592.6,279.6 594.1,286.2 597.9,293.7 603.1,301.2 609,308 614.9,313.2 619.9,316.1 623.4,316 624.5,312.1M597.4,264.3 599,269.5 602.9,275 608.4,280.2 614.6,284.7 620.7,287.9 626,289.4 629.6,288.6 630.8,285.2M602.1,249 603.9,252.9 608.2,256.6 614.3,259.9 621.2,262.3 628,263.8 633.9,263.9 638,262.6 639.3,259.6M609,234.7 611.1,237.7 616.4,240.1 623.7,241.8 632.1,242.6 640.5,242.6 647.7,241.7 652.6,239.9 654.4,237.1M620.5,222.6 623.2,225.2 630.1,226.8 639.9,227.5 650.9,227.4 662,226.4 671.5,224.8 678.1,222.5 680.4,219.7M526.3,318.8 554.6,314.5 573.5,305.8 585.4,293.8 592.6,279.6 597.4,264.3 602.1,249 609,234.7 620.5,222.6M526.3,330 555.4,325 574.7,315.2 586.8,301.9 594.1,286.2 599,269.5 603.9,252.9 611.1,237.7 623.2,225.2M526.8,344.6 557.6,338.3 577.8,326.7 590.4,311.4 597.9,293.7 602.9,275 608.2,256.6 616.4,240.1 630.1,226.8M527.6,360.8 560.7,352.7 582.3,339 595.4,321.3 603.1,301.2 608.4,280.2 614.3,259.9 623.7,241.8 639.9,227.5M528.6,376.4 564.3,366.4 587.3,350.5 601.1,330.5 609,308 614.6,284.7 621.2,262.3 632.1,242.6 650.9,227.4M529.7,389.7 567.9,377.9 592.3,360 606.7,337.9 614.9,313.2 620.7,287.9 628,263.8 640.5,242.6 662,226.4M530.7,398.7 571,385.4 596.5,366 611.5,342.3 619.9,316.1 626,289.4 633.9,263.9 647.7,241.7 671.5,224.8M531.4,401.6 573.2,387.4 599.5,367.2 614.7,342.8 623.4,316 629.6,288.6 638,262.6 652.6,239.9 678.1,222.5M531.9,396.8 573.9,382.5 600.4,362.5 615.8,338.4 624.5,312.1 630.8,285.2 639.3,259.6 654.4,237.1 680.4,219.7M526.3,318.8 526.8,314.5 527.6,317.9 528.6,327 529.6,340.1 530.6,355.3 531.4,371 531.9,385.4 531.9,396.8M554.6,314.5 555.5,310 557.7,312.4 560.8,320 564.3,331.3 567.8,344.7 570.9,358.7 573.1,371.8 573.9,382.5M573.5,305.8 574.6,301.4 577.6,302.9 581.8,309 586.7,318.4 591.6,329.6 595.9,341.6 599.1,352.9 600.4,362.5M585.4,293.8 586.6,289.7 589.9,290.4 594.7,295 600.2,302.2 605.8,311.2 610.7,320.9 614.2,330.3 615.8,338.4M592.6,279.6 593.8,275.9 597.4,275.9 602.4,278.9 608.1,284.1 614,290.7 619.1,298.1 622.8,305.5 624.5,312.1M597.4,264.3 598.7,261 602.4,260.3 607.7,261.8 613.8,265 619.9,269.5 625.3,274.6 629.2,280 630.8,285.2M602.1,249 603.6,245.9 607.7,244.7 613.6,244.9 620.4,246.3 627.2,248.8 633.2,251.9 637.5,255.6 639.3,259.6M609,234.7 610.9,231.8 615.9,230 623.1,229.2 631.3,229.2 639.6,230 646.9,231.7 652.2,234 654.4,237.1M620.5,222.6 622.9,219.7 629.6,217.5 639.1,215.9 650,215 661,214.8 670.6,215.5 677.5,217.1 680.4,219.7M526.8,314.5 555.5,310 574.6,301.4 586.6,289.7 593.8,275.9 598.7,261 603.6,245.9 610.9,231.8 622.9,219.7M527.6,317.9 557.7,312.4 577.6,302.9 589.9,290.4 597.4,275.9 602.4,260.3 607.7,244.7 615.9,230 629.6,217.5M528.6,327 560.8,320 581.8,309 594.7,295 602.4,278.9 607.7,261.8 613.6,244.9 623.1,229.2 639.1,215.9M529.6,340.1 564.3,331.3 586.7,318.4 600.2,302.2 608.1,284.1 613.8,265 620.4,246.3 631.3,229.2 650,215M530.6,355.3 567.8,344.7 591.6,329.6 605.8,311.2 614,290.7 619.9,269.5 627.2,248.8 639.6,230 661,214.8M531.4,371 570.9,358.7 595.9,341.6 610.7,320.9 619.1,298.1 625.3,274.6 633.2,251.9 646.9,231.7 670.6,215.5M531.9,385.4 573.1,371.8 599.1,352.9 614.2,330.3 622.8,305.5 629.2,280 637.5,255.6 652.2,234 677.5,217.1M624.1,220.2 626.9,222.8 634.3,224.3 644.5,224.8 656.2,224.5 667.8,223.4 677.9,221.7 684.8,219.4 687.2,216.6M627.5,218.5 630.4,220.9 637.8,222.2 648.2,222.6 660,222.2 671.8,221.1 682,219.3 689,217 691.5,214.3M630.4,217.5 633.3,219.6 640.5,220.8 650.7,221.1 662.4,220.6 673.9,219.4 683.9,217.6 690.9,215.4 693.3,212.8M632.7,217 635.4,219 642.4,220 652.1,220.2 663.2,219.6 674.3,218.4 683.8,216.7 690.4,214.6 692.8,212.3M634.1,217.3 636.6,219.1 643.1,219.9 652.2,220.1 662.5,219.5 672.8,218.4 681.7,216.8 687.9,214.9 690.1,212.7M634.3,218.2 636.7,219.8 642.5,220.6 650.8,220.8 660.2,220.3 669.6,219.2 677.7,217.8 683.3,216.1 685.3,214.1M633.2,219.8 635.3,221.3 640.5,222.2 647.9,222.4 656.3,222 664.7,221.2 671.9,219.9 677,218.4 678.7,216.6M630.5,222.1 632.3,223.6 636.9,224.6 643.4,225 650.8,224.9 658.1,224.3 664.4,223.2 668.9,221.9 670.4,220.2M620.5,222.6 624.1,220.2 627.5,218.5 630.4,217.5 632.7,217 634.1,217.3 634.3,218.2 633.2,219.8 630.5,222.1M623.2,225.2 626.9,222.8 630.4,220.9 633.3,219.6 635.4,219 636.6,219.1 636.7,219.8 635.3,221.3 632.3,223.6M630.1,226.8 634.3,224.3 637.8,222.2 640.5,220.8 642.4,220 643.1,219.9 642.5,220.6 640.5,222.2 636.9,224.6M639.9,227.5 644.5,224.8 648.2,222.6 650.7,221.1 652.1,220.2 652.2,220.1 650.8,220.8 647.9,222.4 643.4,225M650.9,227.4 656.2,224.5 660,222.2 662.4,220.6 663.2,219.6 662.5,219.5 660.2,220.3 656.3,222 650.8,224.9M662,226.4 667.8,223.4 671.8,221.1 673.9,219.4 674.3,218.4 672.8,218.4 669.6,219.2 664.7,221.2 658.1,224.3M671.5,224.8 677.9,221.7 682,219.3 683.9,217.6 683.8,216.7 681.7,216.8 677.7,217.8 671.9,219.9 664.4,223.2M678.1,222.5 684.8,219.4 689,217 690.9,215.4 690.4,214.6 687.9,214.9 683.3,216.1 677,218.4 668.9,221.9M680.4,219.7 687.2,216.6 691.5,214.3 693.3,212.8 692.8,212.3 690.1,212.7 685.3,214.1 678.7,216.6 670.4,220.2M624.1,220.2 626.6,217.4 633.7,215.1 643.7,213.4 655.2,212.4 666.8,212.1 676.9,212.6 684.3,214.1 687.2,216.6M627.5,218.5 630.1,215.8 637.2,213.5 647.4,211.8 659,210.6 670.8,210.2 681.1,210.6 688.5,211.9 691.5,214.3M630.4,217.5 633,214.9 640,212.7 650,211 661.4,209.8 673,209.3 683.1,209.5 690.3,210.7 693.3,212.8M632.7,217 635.2,214.7 641.9,212.6 651.4,210.9 662.4,209.8 673.4,209.2 683,209.4 690,210.3 692.8,212.3M634.1,217.3 636.4,215.1 642.6,213.2 651.5,211.6 661.7,210.5 672,210 681,210.1 687.5,210.9 690.1,212.7M634.3,218.2 636.4,216.2 642.1,214.5 650.2,213.1 659.5,212.1 668.9,211.6 677.1,211.7 683,212.5 685.3,214.1M633.2,219.8 635.1,218 640.1,216.4 647.4,215.2 655.7,214.4 664,214 671.4,214.2 676.6,215.1 678.7,216.6M630.5,222.1 632.1,220.4 636.6,219 642.9,218 650.2,217.4 657.5,217.3 663.9,217.7 668.5,218.6 670.4,220.2M622.9,219.7 626.6,217.4 630.1,215.8 633,214.9 635.2,214.7 636.4,215.1 636.4,216.2 635.1,218 632.1,220.4M629.6,217.5 633.7,215.1 637.2,213.5 640,212.7 641.9,212.6 642.6,213.2 642.1,214.5 640.1,216.4 636.6,219M639.1,215.9 643.7,213.4 647.4,211.8 650,211 651.4,210.9 651.5,211.6 650.2,213.1 647.4,215.2 642.9,218M650,215 655.2,212.4 659,210.6 661.4,209.8 662.4,209.8 661.7,210.5 659.5,212.1 655.7,214.4 650.2,217.4M661,214.8 666.8,212.1 670.8,210.2 673,209.3 673.4,209.2 672,210 668.9,211.6 664,214 657.5,217.3M670.6,215.5 676.9,212.6 681.1,210.6 683.1,209.5 683,209.4 681,210.1 677.1,211.7 671.4,214.2 663.9,217.7M677.5,217.1 684.3,214.1 688.5,211.9 690.3,210.7 690,210.3 687.5,210.9 683,212.5 676.6,215.1 668.5,218.6M514.6,440.3 511.2,452.3 502,464 487.6,475.1 468.4,485.4 445.2,494.4 418.4,501.9 388.7,507.4 357.1,510.8M511.9,441 508.5,452.7 499.5,464.2 485.3,475.1 466.5,485.2 443.7,494 417.4,501.3 388.4,506.8 357.3,510M505.5,441.8 502.2,453 493.6,464 480,474.4 462,484 440.2,492.5 415.1,499.4 387.4,504.6 357.7,507.7M494,442.9 490.9,453.2 482.9,463.2 470.4,472.8 453.9,481.5 433.9,489.2 410.9,495.6 385.6,500.4 358.5,503.2M475.9,444.3 473.1,453.2 466.1,461.8 455.3,469.9 441.1,477.4 424,483.9 404.4,489.4 382.8,493.4 359.7,495.8M449.6,446.2 447.4,452.9 442,459.4 433.7,465.6 422.9,471.2 409.9,476.1 395,480.2 378.7,483.2 361.3,485M413.6,448.5 412.2,452.4 409.1,456 404.3,459.5 398.2,462.7 390.8,465.4 382.4,467.7 373.3,469.3 363.5,470.3M515.2,439.8 514.6,440.3 511.9,441 505.5,441.8 494,442.9 475.9,444.3 449.6,446.2 413.6,448.5 366.3,451.5M511.7,451.8 511.2,452.3 508.5,452.7 502.2,453 490.9,453.2 473.1,453.2 447.4,452.9 412.2,452.4 366.3,451.5M502.5,463.5 502,464 499.5,464.2 493.6,464 482.9,463.2 466.1,461.8 442,459.4 409.1,456 366.3,451.5M488,474.7 487.6,475.1 485.3,475.1 480,474.4 470.4,472.8 455.3,469.9 433.7,465.6 404.3,459.5 366.3,451.5M468.8,485 468.4,485.4 466.5,485.2 462,484 453.9,481.5 441.1,477.4 422.9,471.2 398.2,462.7 366.3,451.5M445.4,494.1 445.2,494.4 443.7,494 440.2,492.5 433.9,489.2 424,483.9 409.9,476.1 390.8,465.4 366.3,451.5M418.5,501.6 418.4,501.9 417.4,501.3 415.1,499.4 410.9,495.6 404.4,489.4 395,480.2 382.4,467.7 366.3,451.5M388.8,507.2 388.7,507.4 388.4,506.8 387.4,504.6 385.6,500.4 382.8,493.4 378.7,483.2 373.3,469.3 366.3,451.5M357,510.5 357.1,510.8 357.3,510 357.7,507.7 358.5,503.2 359.7,495.8 361.3,485 363.5,470.3 366.3,451.5M374.4,393 403.1,392.5 429.6,394.1 453.4,397.7 474.1,403.1 491.2,410.2 504.1,418.9 512.1,429 514.6,440.3M374.3,394.5 402.5,394 428.5,395.5 451.9,399.1 472.2,404.4 489,411.4 501.6,419.9 509.4,429.8 511.9,441M374,397.3 401,396.8 425.9,398.3 448.3,401.6 467.7,406.8 483.7,413.5 495.7,421.6 503.2,431.1 505.5,441.8M373.4,401.9 398.2,401.4 421.1,402.8 441.7,405.9 459.5,410.7 474.2,416.8 485.2,424.3 492,433.1 494,442.9M372.4,409 393.8,408.6 413.5,409.8 431.3,412.5 446.6,416.6 459.2,421.9 468.5,428.4 474.3,435.9 475.9,444.3M371,419.1 387.4,418.8 402.4,419.7 416,421.8 427.6,424.9 437.2,429 444.2,434 448.5,439.8 449.6,446.2M369,433 378.4,432.8 387,433.4 394.7,434.6 401.4,436.4 406.8,438.7 410.7,441.6 413.1,444.9 413.6,448.5M374.4,392.4 374.4,393 374.3,394.5 374,397.3 373.4,401.9 372.4,409 371,419.1 369,433 366.3,451.5M403.2,391.8 403.1,392.5 402.5,394 401,396.8 398.2,401.4 393.8,408.6 387.4,418.8 378.4,432.8 366.3,451.5M429.8,393.4 429.6,394.1 428.5,395.5 425.9,398.3 421.1,402.8 413.5,409.8 402.4,419.7 387,433.4 366.3,451.5M453.7,397 453.4,397.7 451.9,399.1 448.3,401.6 441.7,405.9 431.3,412.5 416,421.8 394.7,434.6 366.3,451.5M474.5,402.4 474.1,403.1 472.2,404.4 467.7,406.8 459.5,410.7 446.6,416.6 427.6,424.9 401.4,436.4 366.3,451.5M491.7,409.6 491.2,410.2 489,411.4 483.7,413.5 474.2,416.8 459.2,421.9 437.2,429 406.8,438.7 366.3,451.5M504.6,418.3 504.1,418.9 501.6,419.9 495.7,421.6 485.2,424.3 468.5,428.4 444.2,434 410.7,441.6 366.3,451.5M512.6,428.4 512.1,429 509.4,429.8 503.2,431.1 492,433.1 474.3,435.9 448.5,439.8 413.1,444.9 366.3,451.5M215.1,458.5 221.2,446.4 232.7,435 248.8,424.5 268.7,415.1 291.8,407 317.5,400.5 345.2,395.8 374.4,393M218,458.8 224,446.9 235.2,435.7 251,425.4 270.6,416.2 293.2,408.3 318.5,401.9 345.6,397.2 374.3,394.5M224.6,458.8 230.3,447.5 241,436.8 256.1,426.9 274.7,418.1 296.4,410.5 320.5,404.4 346.6,399.9 374,397.3M236.6,458.5 241.7,448.1 251.4,438.3 265.1,429.2 282.2,421.1 302.1,414.1 324.3,408.5 348.2,404.4 373.4,401.9M255.2,457.7 259.5,448.8 267.7,440.4 279.4,432.6 294.1,425.6 311.1,419.5 330.1,414.7 350.7,411.1 372.4,409M282.1,456.4 285.2,449.6 291.4,443.2 300.2,437.2 311.2,431.9 324.2,427.2 338.7,423.5 354.4,420.8 371,419.1M318.7,454.3 320.4,450.5 323.7,446.8 328.7,443.4 334.9,440.4 342.3,437.7 350.5,435.6 359.5,434 369,433M214.4,458 215.1,458.5 218,458.8 224.6,458.8 236.6,458.5 255.2,457.7 282.1,456.4 318.7,454.3 366.3,451.5M220.6,445.9 221.2,446.4 224,446.9 230.3,447.5 241.7,448.1 259.5,448.8 285.2,449.6 320.4,450.5 366.3,451.5M232.1,434.4 232.7,435 235.2,435.7 241,436.8 251.4,438.3 267.7,440.4 291.4,443.2 323.7,446.8 366.3,451.5M248.3,423.9 248.8,424.5 251,425.4 256.1,426.9 265.1,429.2 279.4,432.6 300.2,437.2 328.7,443.4 366.3,451.5M268.3,414.5 268.7,415.1 270.6,416.2 274.7,418.1 282.2,421.1 294.1,425.6 311.2,431.9 334.9,440.4 366.3,451.5M291.5,406.4 291.8,407 293.2,408.3 296.4,410.5 302.1,414.1 311.1,419.5 324.2,427.2 342.3,437.7 366.3,451.5M317.3,399.9 317.5,400.5 318.5,401.9 320.5,404.4 324.3,408.5 330.1,414.7 338.7,423.5 350.5,435.6 366.3,451.5M345.1,395.1 345.2,395.8 345.6,397.2 346.6,399.9 348.2,404.4 350.7,411.1 354.4,420.8 359.5,434 366.3,451.5M357.1,510.8 325.7,511.5 296.8,509.6 271.3,505.4 249.8,499.1 232.9,491 221.2,481.4 215.1,470.4 215.1,458.5M357.3,510 326.5,510.7 298.2,508.9 273.2,504.8 252.1,498.6 235.5,490.7 224,481.2 218,470.5 218,458.8M357.7,507.7 328.4,508.4 301.4,506.7 277.6,502.7 257.4,496.9 241.5,489.3 230.5,480.3 224.7,470 224.6,458.8M358.5,503.2 331.7,503.8 307.1,502.2 285.3,498.6 266.8,493.3 252.3,486.4 242.1,478.1 236.7,468.8 236.6,458.5M359.7,495.8 336.8,496.3 315.8,494.9 297.2,491.9 281.4,487.3 269,481.5 260.2,474.5 255.5,466.5 255.2,457.7M361.3,485 344.1,485.3 328.3,484.3 314.3,482.1 302.3,478.7 292.9,474.3 286.1,469 282.5,463 282.1,456.4M363.5,470.3 353.9,470.5 345,470 337.1,468.7 330.4,466.8 325,464.4 321.1,461.4 319,458 318.7,454.3M325.4,511.2 325.7,511.5 326.5,510.7 328.4,508.4 331.7,503.8 336.8,496.3 344.1,485.3 353.9,470.5 366.3,451.5M296.5,509.4 296.8,509.6 298.2,508.9 301.4,506.7 307.1,502.2 315.8,494.9 328.3,484.3 345,470 366.3,451.5M270.9,505.1 271.3,505.4 273.2,504.8 277.6,502.7 285.3,498.6 297.2,491.9 314.3,482.1 337.1,468.7 366.3,451.5M249.3,498.8 249.8,499.1 252.1,498.6 257.4,496.9 266.8,493.3 281.4,487.3 302.3,478.7 330.4,466.8 366.3,451.5M232.3,490.7 232.9,491 235.5,490.7 241.5,489.3 252.3,486.4 269,481.5 292.9,474.3 325,464.4 366.3,451.5M220.5,481 221.2,481.4 224,481.2 230.5,480.3 242.1,478.1 260.2,474.5 286.1,469 321.1,461.4 366.3,451.5M214.4,470 215.1,470.4 218,470.5 224.7,470 236.7,468.8 255.5,466.5 282.5,463 319,458 366.3,451.5" stroke="#fff" stroke-width="1" fill="none"/>
<g fill="none" stroke-width="1.3">
<rect x="348.4" y="434.3" width="36" height="36" stroke="#8a8a8a" stroke-width="1"/>
<path d="M405.5,436.3L499,398.3M428.1,427.2L376.5,408.1M428.1,427.2L421.9,355.1" stroke="#d40000"/>
<path d="M333.6,439.8L254.5,409.5M314.7,432.5L376.5,408.1M314.7,432.5L307.3,360.1" stroke="#00a000"/>
<path d="M359.5,379L421.9,355.1M359.5,379L307.3,360.1" stroke="#0000e0"/>
<path d="M362.1,406.3L351,289.2" stroke="#f0e000" stroke-width="1.3"/>
</g>
<path d="M542.3,380.7 503.2,407.9 501.6,408.3 499.7,407.9 497.9,406.9 496,405.4 494.4,403.3 493.2,400.9 492.3,398.3 491.8,395.7 491.9,393.3 492.4,391.3 493.4,389.7 494.8,388.6 496.4,388.3Z" fill="#c80000"/><path d="M491.8,395.7 491.9,393.3 492.4,391.3 493.4,389.7 494.8,388.6 496.4,388.3 498.3,388.6 500.2,389.6 502,391.2 503.6,393.2 504.9,395.7 505.8,398.2 506.2,400.8 506.1,403.3 505.6,405.3 504.6,406.9 503.2,407.9 501.6,408.3 499.7,407.9 497.9,406.9 496,405.4 494.4,403.3 493.2,400.9 492.3,398.3Z" fill="#6a0000"/>
<path d="M257.9,399.4 259.9,400.3 261.5,401.8 262.6,403.8 263.2,406.2 263.1,408.8 262.5,411.5 261.4,414.1 259.8,416.3 257.8,418.1 255.6,419.3 253.3,419.8 251.1,419.6 249.1,418.8 217.4,395.3Z" fill="#009a00"/><path d="M253.4,399.7 255.7,399.2 257.9,399.4 259.9,400.3 261.5,401.8 262.6,403.8 263.2,406.2 263.1,408.8 262.5,411.5 261.4,414.1 259.8,416.3 257.8,418.1 255.6,419.3 253.3,419.8 251.1,419.6 249.1,418.8 247.5,417.3 246.3,415.3 245.8,412.8 245.8,410.2 246.4,407.5 247.6,404.9 249.2,402.7 251.2,400.9Z" fill="#004e00"/>
<path d="M345.5,231.1 362.4,287.7 362.5,288.7 361.8,289.8 360.4,290.8 358.4,291.7 355.8,292.4 352.9,292.9 349.9,293.2 346.9,293.2 344.3,292.9 342,292.3 340.4,291.6 339.6,290.7 339.5,289.6Z" fill="#0000c8"/>
<g font-family="Liberation Sans, sans-serif">
<text x="542.8" y="382.2" fill="#d40000" font-size="16">X</text>
<text transform="translate(215.9,396.8) scale(0.85,1)" fill="#00a800" font-size="25">y</text>
<text x="343" y="228.6" fill="#f0e000" font-size="16" font-weight="bold">Z</text>
</g>
</svg>
<div id="vplabel"><span style="left:0;transform:scaleX(1.055)">[+ ]</span> <span style="left:44.7px;transform:scaleX(0.945)">[Perspective ]</span>  <span style="left:187.2px;transform:scaleX(0.968)">[User Defined ]</span> <span style="left:343.8px;">[Wireframe ]</span></div>
<div id="shadow"></div>
<div id="dlg">
  <div id="title"><span class="t">Object Properties</span><span class="q" style="transform:scaleX(0.8);transform-origin:center;display:inline-block">?</span>
    <svg width="20" height="20" viewBox="0 0 20 20"><path d="M0.5,0.5L19.5,19.5M19.5,0.5L0.5,19.5" stroke="#999" stroke-width="1.5" fill="none"/></svg>
  </div>
  <div id="tabline"></div>
  <div class="tab" style="left:5px;width:96px;"><span style="transform:scaleX(0.915)">General</span></div>
  <div class="tab" style="left:101px;width:147px;"><span style="transform:scaleX(0.978)">Adv. Lighting</span></div>
  <div class="tab on" style="left:248px;width:145px;"><span style="transform:scaleX(0.953)">User Defined</span></div>
  <div id="lbl"><span style="transform:scaleX(0.951)">User Defined Properties:</span></div>
  <div id="ta"><div class="tx"><span style="transform:scaleX(0.954)">diffuse_color=1,0,0</span></div>
    <div id="sb"><svg width="14" height="9" viewBox="0 0 14 9"><path d="M1,8L7,2L13,8" stroke="#c0c0c0" stroke-width="2.2" fill="none"/></svg></div>
  </div>
</div>
</body>
</html>
